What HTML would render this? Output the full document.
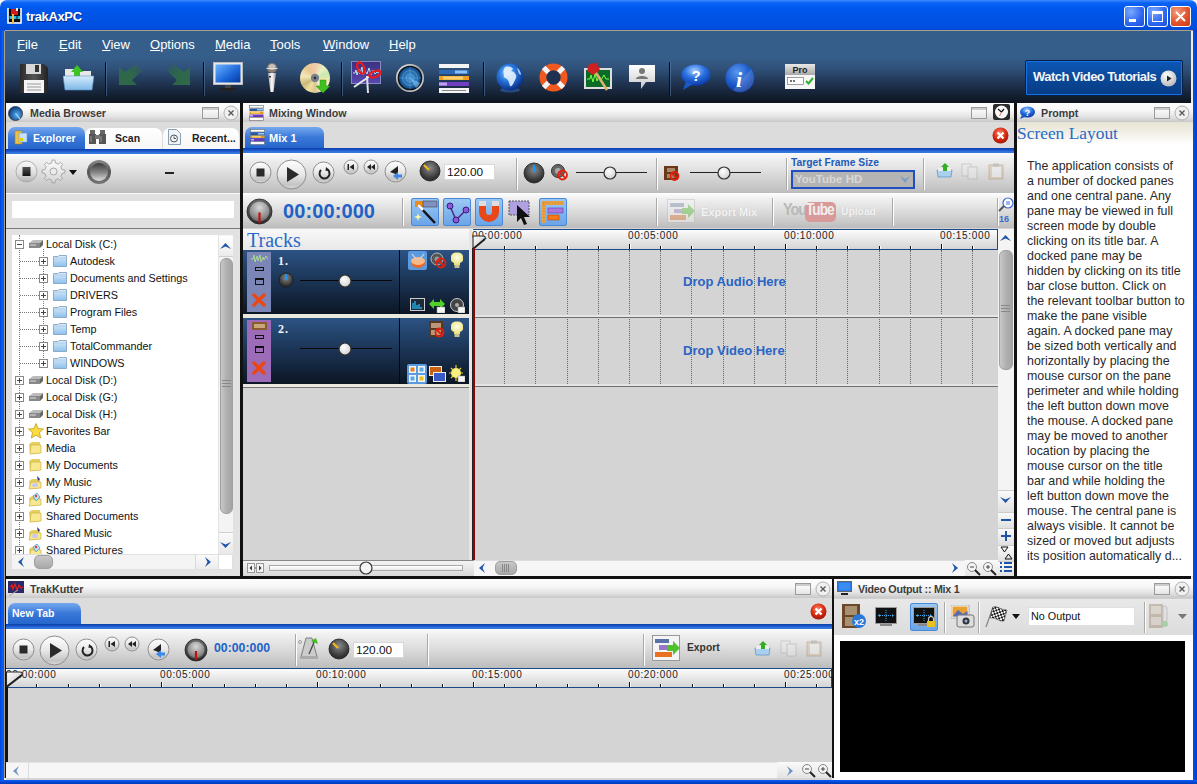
<!DOCTYPE html>
<html><head><meta charset="utf-8">
<style>
*{margin:0;padding:0;box-sizing:border-box}
html,body{width:1197px;height:784px;overflow:hidden;background:#111;font-family:"Liberation Sans",sans-serif}
.a{position:absolute}
#title{left:0;top:0;width:1197px;height:31px;background:linear-gradient(#3d8bff 0,#0a62f5 3px,#0058ee 8px,#0054e6 50%,#0050e0 85%,#0046d2 100%);border-radius:7px 7px 0 0}
#fl{left:0;top:30px;width:5px;height:754px;background:linear-gradient(90deg,#0046d6,#0a5cf6 50%,#0050e8)}
#fr{left:1193px;top:30px;width:4px;height:754px;background:linear-gradient(90deg,#0050e8,#0040c8)}
#fb{left:0;top:780px;width:1197px;height:4px;background:linear-gradient(#0a5cf6,#0036b8)}
#menu{left:5px;top:30px;width:1188px;height:73px;border-top:1.5px solid #a8a08c;background:linear-gradient(#365e8b 0,#365e8b 26px,#2f5078 38px,#1d2f4a 55px,#0d141e 72px)}
.mi{top:37px;color:#fff;font-size:13px}
.mi u{text-decoration:underline;text-underline-offset:1px}
.pane{background:#e4e4e4}
.ptitle{position:absolute;left:0;top:0;right:0;height:20px;background:linear-gradient(#fdfdfd 0,#f8f8f8 35%,#e2e2e2 70%,#c8c8c8 95%,#d4d4d4 100%);font-size:11px;font-weight:bold;color:#3a3a3a}
.tabstrip{position:absolute;left:0;right:0;background:#dcdcdc}
.bline{position:absolute;left:0;right:0;height:6px;background:linear-gradient(#0a3ea8 0,#1a56cc 35%,#3a80e2 70%,#1650c0 100%)}
.tb{position:absolute;left:0;right:0;background:linear-gradient(#fbfbfb 0,#f0f0f0 14%,#e2e2e2 40%,#cacaca 80%,#bcbcbc 100%)}
.tab{position:absolute;border-radius:7px 7px 0 0;font-size:11px;font-weight:bold}
.tab.on{background:linear-gradient(#74a7ef,#3a78d8 50%,#2565cc);color:#fff}
.sep{position:absolute;width:2px;background:linear-gradient(90deg,#a8a8a8,#fff)}
.tsep{position:absolute;width:1px;background:#080e18;box-shadow:1px 0 0 rgba(100,140,190,.45)}
</style></head><body>
<div class="a" style="left:0;top:0;width:8px;height:8px;background:#f4f4f4"></div><div class="a" style="left:1189px;top:0;width:8px;height:8px;background:#f4f4f4"></div>
<div id="title" class="a"></div>
<div id="fl" class="a"></div>
<div id="fr" class="a"></div>
<div id="fb" class="a"></div>
<div id="menu" class="a"></div>
<div class="a" style="left:4px;top:31px;width:1px;height:749px;background:#a8a08c"></div><div class="a" style="left:1191px;top:31px;width:2px;height:749px;background:#ecece8"></div><div class="a" style="left:4px;top:778px;width:1189px;height:2px;background:#f0efe8"></div>

<!-- Title text -->
<div class="a" style="left:26px;top:9px;color:#fff;font-size:13px;font-weight:bold;letter-spacing:-0.35px;text-shadow:1px 1px 0 #0a2a8a">trakAxPC</div>

<!-- Menu -->
<div class="a mi" style="left:17px"><u>F</u>ile</div>
<div class="a mi" style="left:59px"><u>E</u>dit</div>
<div class="a mi" style="left:102px"><u>V</u>iew</div>
<div class="a mi" style="left:150px"><u>O</u>ptions</div>
<div class="a mi" style="left:215px"><u>M</u>edia</div>
<div class="a mi" style="left:270px"><u>T</u>ools</div>
<div class="a mi" style="left:323px"><u>W</u>indow</div>
<div class="a mi" style="left:389px"><u>H</u>elp</div>


<!-- app icon -->
<svg class="a" style="left:7px;top:8px" width="15" height="16" viewBox="0 0 15 16"><rect x="1" y="1" width="13" height="13" fill="#0a0a0a"/><path d="M1 0V15H14V0" fill="none" stroke="#fff" stroke-width="1.6"/><rect x="4" y="1" width="7" height="6" fill="#d81818"/><rect x="9" y="0" width="2" height="3" fill="#f0f0f0"/><rect x="2.5" y="8" width="2.5" height="3" fill="#18c0f0"/><rect x="7" y="8" width="2.5" height="3" fill="#18c0f0"/><rect x="10.5" y="8" width="2.5" height="3" fill="#18c0f0"/><rect x="5" y="6" width="2" height="10" fill="#f8c040"/></svg>
<!-- window buttons -->
<div class="a" style="left:1124px;top:6px;width:21px;height:21px;border:1px solid #fff;border-radius:3px;background:radial-gradient(circle at 30% 25%,#7aa8ff,#2c66f0 60%,#1d4fd8)"><div class="a" style="left:4px;top:12px;width:7px;height:3px;background:#fff"></div></div>
<div class="a" style="left:1147px;top:6px;width:21px;height:21px;border:1px solid #fff;border-radius:3px;background:radial-gradient(circle at 30% 25%,#7aa8ff,#2c66f0 60%,#1d4fd8)"><div class="a" style="left:4px;top:4px;width:11px;height:11px;border:1px solid #fff;border-top-width:3px"></div></div>
<div class="a" style="left:1170px;top:6px;width:21px;height:21px;border:1px solid #fff;border-radius:3px;background:radial-gradient(circle at 30% 25%,#f49a7a,#e0502a 60%,#c83a18)"><svg class="a" style="left:3px;top:3px" width="13" height="13"><path d="M2 2L11 11M11 2L2 11" stroke="#fff" stroke-width="2"/></svg></div>

<!-- toolbar separators -->
<div class="a tsep" style="left:105px;top:62px;height:34px"></div>
<div class="a tsep" style="left:203px;top:62px;height:34px"></div>
<div class="a tsep" style="left:341px;top:62px;height:34px"></div>
<div class="a tsep" style="left:483px;top:62px;height:34px"></div>
<div class="a tsep" style="left:669px;top:62px;height:34px"></div>

<!-- floppy -->
<svg class="a" style="left:19px;top:63px" width="30" height="31" viewBox="0 0 30 31"><defs><linearGradient id="fg" x1="0" x2="1"><stop offset="0" stop-color="#2a2a2a"/><stop offset=".5" stop-color="#555"/><stop offset="1" stop-color="#222"/></linearGradient></defs><path d="M1 1H25L29 5V30H1Z" fill="url(#fg)"/><rect x="7" y="1" width="15" height="10" fill="#d8d8d8"/><rect x="16" y="2" width="4" height="7" fill="#333"/><rect x="5" y="17" width="20" height="13" fill="#f4f4f4"/><path d="M8 21H22M8 24H22M8 27H22" stroke="#999" stroke-width="1"/></svg>
<!-- open folder -->
<svg class="a" style="left:63px;top:63px" width="31" height="30" viewBox="0 0 31 30"><defs><linearGradient id="ofg" x1="0" y1="0" x2="0" y2="1"><stop offset="0" stop-color="#d6ecfc"/><stop offset="1" stop-color="#7db8e8"/></linearGradient></defs><path d="M2 6H12L14 8H28V16H2Z" fill="#e8e8e8"/><path d="M14 2L20 9H17V17H11V9H8Z" fill="#3ec422"/><path d="M0 13H31L29 27H2Z" fill="url(#ofg)" stroke="#5a90c0" stroke-width=".6"/></svg>
<!-- back/fwd (disabled) -->
<svg class="a" style="left:117px;top:64px" width="26" height="27" viewBox="0 0 26 27"><defs><linearGradient id="bkg" x1="1" y1="0" x2="0" y2="1"><stop offset="0" stop-color="#2f6a48" stop-opacity="0"/><stop offset=".45" stop-color="#2f6a48" stop-opacity=".9"/><stop offset="1" stop-color="#2f6a48"/></linearGradient></defs><path d="M26 6L15 16L20 21H2V3L8 8L19 0Z" fill="url(#bkg)"/></svg>
<svg class="a" style="left:166px;top:64px" width="26" height="27" viewBox="0 0 26 27"><defs><linearGradient id="fwg" x1="0" y1="0" x2="1" y2="1"><stop offset="0" stop-color="#2f6a48" stop-opacity="0"/><stop offset=".45" stop-color="#2f6a48" stop-opacity=".9"/><stop offset="1" stop-color="#2f6a48"/></linearGradient></defs><path d="M0 6L11 16L6 21H24V3L18 8L7 0Z" fill="url(#fwg)"/></svg>
<!-- monitor -->
<svg class="a" style="left:213px;top:62px" width="30" height="30" viewBox="0 0 30 30"><defs><linearGradient id="mong" x1="0" y1="0" x2="1" y2="1"><stop offset="0" stop-color="#6cb4ff"/><stop offset=".6" stop-color="#1a64d8"/><stop offset="1" stop-color="#0a3a9a"/></linearGradient></defs><rect x="0.5" y="0.5" width="29" height="22" fill="#e8e8e8" stroke="#bbb"/><rect x="2.5" y="2.5" width="25" height="18" fill="url(#mong)"/><rect x="12" y="23" width="6" height="3" fill="#444"/><rect x="7" y="26" width="16" height="3" rx="1.5" fill="#222"/></svg>
<!-- mic -->
<svg class="a" style="left:265px;top:62px" width="14" height="31" viewBox="0 0 14 31"><defs><linearGradient id="micg" x1="0" x2="1"><stop offset="0" stop-color="#aaa"/><stop offset=".5" stop-color="#fafafa"/><stop offset="1" stop-color="#999"/></linearGradient></defs><ellipse cx="7" cy="6" rx="5" ry="5" fill="#8a7a70"/><ellipse cx="7" cy="5" rx="3.5" ry="3" fill="#c8c0b8"/><path d="M1.5 6.5H12.5" stroke="#ddd" stroke-width="1"/><path d="M3 11L5.5 30H8.5L11 11Z" fill="url(#micg)"/><rect x="4" y="14" width="2" height="1.5" fill="#333"/></svg>
<!-- cd -->
<div class="a" style="left:300px;top:63px;width:30px;height:30px;border-radius:50%;background:conic-gradient(from 0deg,#f4c8a8,#e8f0c0 40deg,#c8e8b0 70deg,#f0e8a8 100deg,#f8f0d8 140deg,#d8c890 180deg,#f0e0a0 210deg,#c8b878 240deg,#f4e8b8 280deg,#e8c890 320deg,#f4c8a8)"></div>
<svg class="a" style="left:300px;top:62px" width="32" height="32" viewBox="0 0 32 32"><circle cx="15" cy="16" r="4.2" fill="#7a8090"/><circle cx="15" cy="16" r="1.4" fill="#333"/><path d="M20 18H26V24H30L23 31L16 24H20Z" fill="#40c020" stroke="#2a9010" stroke-width=".5"/></svg>
<!-- scissors wave -->
<svg class="a" style="left:351px;top:61px" width="31" height="33" viewBox="0 0 31 33"><defs><linearGradient id="scg" x1="0" y1="0" x2="0" y2="1"><stop offset="0" stop-color="#3a3080"/><stop offset="1" stop-color="#5a48b0"/></linearGradient></defs><rect x=".5" y=".5" width="29" height="22" fill="url(#scg)" stroke="#8a88c0"/><path d="M2 12H4L5 9L6 14L8 8L9 13L11 6L12 14L14 10L16 13L18 7L20 14L22 9L24 13L26 11L28 12" stroke="#c8f0e8" fill="none" stroke-width=".9"/><path d="M16 15L17 32" stroke="#e0e0e0" stroke-width="2"/><path d="M19 15L3 26" stroke="#e8e8e8" stroke-width="2"/><ellipse cx="10" cy="7" rx="3.2" ry="6" transform="rotate(-25 10 7)" fill="none" stroke="#f01818" stroke-width="2.2"/><ellipse cx="24" cy="13" rx="6" ry="3" transform="rotate(-20 24 13)" fill="none" stroke="#f01818" stroke-width="2.2"/></svg>
<!-- radar -->
<svg class="a" style="left:395px;top:63px" width="30" height="30" viewBox="0 0 30 30"><defs><radialGradient id="rdg" cx=".5" cy=".5" r=".5"><stop offset="0" stop-color="#4a98d8"/><stop offset=".85" stop-color="#1a5a98"/><stop offset="1" stop-color="#0a2a50"/></radialGradient><linearGradient id="rdr" x1="0" y1="0" x2="1" y2="1"><stop offset="0" stop-color="#f0f0f0"/><stop offset=".5" stop-color="#a0a0a0"/><stop offset="1" stop-color="#e0e0e0"/></linearGradient></defs><circle cx="15" cy="15" r="14" fill="url(#rdr)"/><circle cx="15" cy="15" r="12.3" fill="#0a0a10"/><circle cx="15" cy="15" r="11.3" fill="url(#rdg)"/><circle cx="15" cy="15" r="7.5" fill="none" stroke="#6ab0e8" stroke-width=".5"/><circle cx="15" cy="15" r="4" fill="none" stroke="#6ab0e8" stroke-width=".5"/><path d="M15 4V26M4 15H26" stroke="#6ab0e8" stroke-width=".4"/><path d="M15 15L21 25A11 11 0 0 0 25 20Z" fill="#8ad0ff" opacity=".55"/></svg>
<!-- mixer -->
<svg class="a" style="left:439px;top:64px" width="30" height="29" viewBox="0 0 30 29"><rect x="0" y="0" width="30" height="4" fill="#f4f4f4"/><rect x="0" y="6" width="30" height="4" fill="#2a6ab8"/><rect x="16" y="6.5" width="12" height="3" fill="#8ac0f8"/><rect x="0" y="12" width="30" height="4" fill="#f0a020"/><rect x="4" y="12.5" width="20" height="3" fill="#f8d070"/><rect x="0" y="18" width="30" height="4" fill="#7040c0"/><rect x="0" y="18.5" width="8" height="3" fill="#c0a0f0"/><rect x="0" y="24" width="30" height="5" fill="#f4f4f4"/><rect x="3" y="26" width="24" height="1" fill="#888"/></svg>
<!-- globe -->
<svg class="a" style="left:495px;top:63px" width="30" height="30" viewBox="0 0 30 30"><defs><radialGradient id="glg" cx=".4" cy=".35" r=".65"><stop offset="0" stop-color="#9ad0ff"/><stop offset=".45" stop-color="#2a7ae0"/><stop offset="1" stop-color="#0a3088"/></radialGradient></defs><ellipse cx="15" cy="27" rx="10" ry="2.5" fill="#3a7ad0" opacity=".45"/><circle cx="15" cy="14" r="13.5" fill="url(#glg)"/><path d="M10 4C13 3 17 4 18 6L16 8L19 9L21 12C22 14 20 17 19 19C18 22 16 24 15 23C14 20 14 18 12 16C10 15 8 14 9 12C8 10 8 7 10 4Z" fill="#eef6ff" opacity=".85"/><path d="M22 5C24 6 26 9 26 12L24 11Z" fill="#eef6ff" opacity=".7"/></svg>
<!-- lifebuoy -->
<svg class="a" style="left:539px;top:63px" width="29" height="29" viewBox="0 0 29 29"><circle cx="14.5" cy="14.5" r="10.5" fill="none" stroke="#f05a20" stroke-width="7"/><path d="M14.5 0.5V7.5M14.5 21.5V28.5M0.5 14.5H7.5M21.5 14.5H28.5" stroke="#f4f4f4" stroke-width="5" transform="rotate(45 14.5 14.5)"/><circle cx="14.5" cy="14.5" r="7" fill="#1e3150"/></svg>
<!-- axe on screen -->
<svg class="a" style="left:583px;top:63px" width="30" height="29" viewBox="0 0 30 29"><rect x="1" y="5" width="28" height="21" fill="#ddd"/><rect x="3" y="7" width="24" height="17" fill="#0a6a28"/><path d="M4 16L7 16L8 12L10 19L12 11L14 18L16 13L18 17L21 12L23 16L26 16" stroke="#80ff40" fill="none"/><path d="M8 2L24 27" stroke="#e0b070" stroke-width="2.5"/><path d="M6 1L14 0L17 7L10 12L4 8Z" fill="#d02020"/></svg>
<!-- avatar bubble -->
<svg class="a" style="left:628px;top:64px" width="28" height="26" viewBox="0 0 28 26"><defs><linearGradient id="avg" x1="0" y1="0" x2="0" y2="1"><stop offset="0" stop-color="#fff"/><stop offset="1" stop-color="#c8c8c8"/></linearGradient></defs><path d="M1 1H27V18H18L13 25L13 18H1Z" fill="url(#avg)"/><circle cx="14" cy="7" r="3" fill="#777"/><path d="M8 15C8 11 20 11 20 15Z" fill="#777"/></svg>
<!-- help bubble -->
<svg class="a" style="left:680px;top:64px" width="31" height="27" viewBox="0 0 31 27"><defs><radialGradient id="hbg" cx=".45" cy=".3" r=".7"><stop offset="0" stop-color="#a8d0ff"/><stop offset=".5" stop-color="#2a70e0"/><stop offset="1" stop-color="#0a3aa8"/></radialGradient></defs><ellipse cx="16" cy="11" rx="14.5" ry="10.5" fill="url(#hbg)"/><path d="M6 17L3 26L13 20Z" fill="#1a58c8"/><text x="16" y="17" font-family="Liberation Sans" font-weight="bold" font-size="15" fill="#fff" text-anchor="middle">?</text></svg>
<!-- info -->
<svg class="a" style="left:725px;top:63px" width="30" height="30" viewBox="0 0 30 30"><defs><radialGradient id="ifg" cx=".4" cy=".3" r=".75"><stop offset="0" stop-color="#5a98f0"/><stop offset=".6" stop-color="#1a58c8"/><stop offset="1" stop-color="#0a3090"/></radialGradient></defs><circle cx="15" cy="15" r="14.5" fill="url(#ifg)"/><path d="M29 14A14 14 0 0 1 8 27L26 6A14 14 0 0 1 29 14Z" fill="#fff" opacity=".15"/><text x="14" y="24" font-family="Liberation Serif" font-style="italic" font-weight="bold" font-size="22" fill="#fff" text-anchor="middle">i</text></svg>
<!-- pro -->
<svg class="a" style="left:785px;top:64px" width="30" height="25" viewBox="0 0 30 25"><defs><linearGradient id="prg" x1="0" y1="0" x2="0" y2="1"><stop offset="0" stop-color="#e8e8e8"/><stop offset="1" stop-color="#a8a8a8"/></linearGradient></defs><rect x="0" y="0" width="30" height="25" fill="#f6f6f6"/><rect x="0" y="0" width="30" height="11" fill="url(#prg)"/><text x="15" y="9" font-family="Liberation Sans" font-weight="bold" font-size="9" fill="#222" text-anchor="middle">Pro</text><rect x="2.5" y="13.5" width="16" height="7" fill="#fff" stroke="#777" stroke-width=".7"/><circle cx="6" cy="17" r="1.1" fill="#555"/><circle cx="9" cy="17" r="1.1" fill="#555"/><path d="M21 17L23.5 19.5L28 14" stroke="#30b030" stroke-width="2" fill="none"/></svg>

<!-- Watch Video Tutorials -->
<div class="a" style="left:1025px;top:60px;width:158px;height:36px;border:1px solid #05204a;border-radius:2px;background:linear-gradient(#0c58b8,#0a4898 50%,#083c84);box-shadow:inset 0 0 0 1px #1a70e0"></div>
<div class="a" style="left:1033px;top:69px;color:#f4f4f4;font-size:13px;font-weight:bold;letter-spacing:-0.55px">Watch Video Tutorials</div>
<svg class="a" style="left:1160px;top:70px" width="17" height="17" viewBox="0 0 17 17"><defs><radialGradient id="wvg" cx=".4" cy=".3" r=".7"><stop offset="0" stop-color="#fff"/><stop offset="1" stop-color="#bbb"/></radialGradient></defs><circle cx="8.5" cy="8.5" r="8" fill="url(#wvg)"/><path d="M7 5.5L11.5 8.5L7 11.5Z" fill="#222"/></svg>

<!-- Panes -->
<div class="a pane" style="left:6px;top:103px;width:234px;height:473px;background:#e2e2e2"></div>
<div class="a ptitle" style="left:6px;top:103px;width:234px"></div>
<svg class="a" style="left:8px;top:106px" width="15" height="15" viewBox="0 0 15 15"><defs><radialGradient id="mbg" cx=".6" cy=".6" r=".6"><stop offset="0" stop-color="#5ab0f0"/><stop offset="1" stop-color="#0a3a80"/></radialGradient></defs><circle cx="7.5" cy="7.5" r="7" fill="url(#mbg)" stroke="#333" stroke-width=".8"/><path d="M7.5 7.5L12 13" stroke="#8ad0ff" stroke-width="1.2"/></svg>
<div class="a" style="left:30px;top:107px;font-size:10.7px;font-weight:bold;color:#3c3c3c">Media Browser</div>
<div class="a" style="left:202px;top:107px;width:17px;height:12px;border:1px solid #9a9a9a;background:linear-gradient(#fff,#e4e4e4);box-shadow:inset 0 2px 0 #ccc"></div>
<svg class="a" style="left:223px;top:105px" width="16" height="16" viewBox="0 0 16 16"><circle cx="8" cy="8" r="7" fill="#f0f0f0" stroke="#b0b0b0"/><path d="M5.5 5.5L10.5 10.5M10.5 5.5L5.5 10.5" stroke="#5a5a5a" stroke-width="1.4"/></svg>
<div class="a" style="left:6px;top:122px;width:234px;height:27px;background:#dcdcdc"></div>
<div class="a tab on" style="left:8px;top:127px;width:77px;height:22px"></div>
<div class="a tab" style="left:85px;top:128px;width:77px;height:21px;background:linear-gradient(#fff,#f6f6f6)"></div>
<div class="a tab" style="left:163px;top:128px;width:76px;height:21px;background:linear-gradient(#fff,#f6f6f6)"></div>
<svg class="a" style="left:14px;top:130px" width="14" height="15" viewBox="0 0 14 15"><path d="M1 1H8V14H1Z" fill="#f0c040" stroke="#b08010" stroke-width=".6"/><rect x="5" y="3" width="8" height="9" fill="#c8e0f8" stroke="#6a9ad0" stroke-width=".6"/><rect x="6" y="8" width="3" height="3" fill="#e0d000"/></svg>
<div class="a" style="left:33px;top:132px;font-size:10.5px;font-weight:bold;color:#fff">Explorer</div>
<svg class="a" style="left:89px;top:129px" width="17" height="16" viewBox="0 0 17 16"><rect x="1" y="1" width="5" height="5" fill="#666"/><rect x="11" y="1" width="5" height="5" fill="#666"/><path d="M0 5H7V15H0ZM10 5H17V15H10Z" fill="#555"/><rect x="6" y="6" width="5" height="4" fill="#777"/><path d="M2 7V13M12 7V13" stroke="#999"/></svg>
<div class="a" style="left:115px;top:132px;font-size:10.5px;font-weight:bold;color:#222">Scan</div>
<svg class="a" style="left:168px;top:129px" width="13" height="16" viewBox="0 0 13 16"><path d="M0.5 0.5H8.5L12.5 4.5V15.5H0.5Z" fill="#eef4f8" stroke="#8aa0b0"/><circle cx="6" cy="9.5" r="3.5" fill="none" stroke="#555"/><path d="M6 7.5V9.5H8" stroke="#555" fill="none"/></svg>
<div class="a" style="left:192px;top:132px;font-size:10.5px;font-weight:bold;color:#222">Recent...</div>
<div class="a bline" style="left:6px;top:149px;width:234px"></div>
<div class="a tb" style="left:6px;top:154px;width:234px;height:39px"></div>
<svg class="a" style="left:15px;top:160px" width="23" height="23" viewBox="0 0 23 23"><defs><linearGradient id="stg" x1="0" y1="0" x2="0" y2="1"><stop offset="0" stop-color="#fafafa"/><stop offset=".6" stop-color="#dcdcdc"/><stop offset="1" stop-color="#b0b0b0"/></linearGradient><linearGradient id="stq" x1="0" y1="0" x2="0" y2="1"><stop offset="0" stop-color="#555"/><stop offset="1" stop-color="#111"/></linearGradient></defs><circle cx="11.5" cy="11.5" r="10.5" fill="url(#stg)" stroke="#a8a8a8" stroke-width=".9"/><rect x="7.5" y="7" width="8" height="9" fill="url(#stq)"/></svg>
<svg class="a" style="left:41px;top:159px" width="25" height="25" viewBox="0 0 25 25"><defs><linearGradient id="gearg" x1="0" y1="0" x2="0" y2="1"><stop offset="0" stop-color="#fcfcfc"/><stop offset="1" stop-color="#d4d4d4"/></linearGradient></defs><path d="M10.65 3.90L11.06 1.09L13.94 1.09L14.35 3.90L17.27 5.11L19.55 3.41L21.59 5.45L19.89 7.73L21.10 10.65L23.91 11.06L23.91 13.94L21.10 14.35L19.89 17.27L21.59 19.55L19.55 21.59L17.27 19.89L14.35 21.10L13.94 23.91L11.06 23.91L10.65 21.10L7.73 19.89L5.45 21.59L3.41 19.55L5.11 17.27L3.90 14.35L1.09 13.94L1.09 11.06L3.90 10.65L5.11 7.73L3.41 5.45L5.45 3.41L7.73 5.11Z" fill="url(#gearg)" stroke="#a0a0a0" stroke-width=".9" stroke-linejoin="round"/><circle cx="12.5" cy="12.5" r="3.5" fill="#ececec" stroke="#a8a8a8" stroke-width="1"/></svg>
<svg class="a" style="left:69px;top:170px" width="8" height="5"><path d="M0 0H8L4 5Z" fill="#111"/></svg>
<svg class="a" style="left:86px;top:159px" width="26" height="26" viewBox="0 0 26 26"><defs><linearGradient id="rbo" x1="0" y1="0" x2="0" y2="1"><stop offset="0" stop-color="#8a8a8a"/><stop offset=".5" stop-color="#555"/><stop offset="1" stop-color="#777"/></linearGradient><linearGradient id="rbi" x1="0" y1="0" x2="0" y2="1"><stop offset="0" stop-color="#3a3a3a"/><stop offset=".55" stop-color="#8a8a8a"/><stop offset="1" stop-color="#e0e0e0"/></linearGradient></defs><circle cx="13" cy="13" r="12" fill="url(#rbo)"/><circle cx="13" cy="13" r="9" fill="url(#rbi)"/></svg>
<div class="a" style="left:165px;top:172px;width:9px;height:1.5px;background:#222"></div>
<div class="a" style="left:6px;top:193px;width:234px;height:35px;background:#e0e0e0;border-top:1px solid #f8f8f8"></div>
<div class="a" style="left:12px;top:201px;width:222px;height:17px;background:#fff"></div>
<div class="a" style="left:6px;top:228px;width:234px;height:1px;background:#7a7a7a"></div>
<div class="a" style="left:12px;top:235px;width:206px;height:319px;background:#fff;overflow:hidden">
<div class="a" style="left:7px;top:0px;width:0;height:320px;border-left:1px dotted #777"></div>
<div class="a" style="left:31px;top:14px;width:0;height:119px;border-left:1px dotted #777"></div>
<div class="a" style="left:3px;top:5px;width:9px;height:9px;border:1px solid #888;background:#fff"></div>
<div class="a" style="left:5px;top:9px;width:5px;height:1px;background:#444"></div>
<svg class="a" style="left:16px;top:4px" width="16" height="10" viewBox="0 0 16 10"><path d="M1 4L5 1H15L12 4Z" fill="#bbb"/><path d="M1 4H12V9H1Z" fill="#888"/><path d="M12 4L15 1V6L12 9Z" fill="#666"/><path d="M2 6H8" stroke="#ddd"/></svg>
<div class="a" style="left:34px;top:3px;font-size:10.8px;color:#111;white-space:nowrap">Local Disk (C:)</div>
<div class="a" style="left:8px;top:26px;width:19px;height:0;border-top:1px dotted #777"></div>
<div class="a" style="left:27px;top:22px;width:9px;height:9px;border:1px solid #888;background:#fff"></div>
<div class="a" style="left:29px;top:26px;width:5px;height:1px;background:#444"></div>
<div class="a" style="left:31px;top:24px;width:1px;height:5px;background:#444"></div>
<svg class="a" style="left:41px;top:20px" width="14" height="12" viewBox="0 0 14 12"><defs><linearGradient id="fb1" x1="0" y1="0" x2="0" y2="1"><stop offset="0" stop-color="#dcecfa"/><stop offset="1" stop-color="#8cc0ec"/></linearGradient></defs><path d="M0.5 1.5H5L6 0.5H13.5V11.5H0.5Z" fill="url(#fb1)" stroke="#7a9cbc" stroke-width=".8"/><path d="M0.5 3H13.5" stroke="#aac8e4" stroke-width=".8"/></svg>
<div class="a" style="left:58px;top:20px;font-size:10.8px;color:#111;white-space:nowrap">Autodesk</div>
<div class="a" style="left:8px;top:43px;width:19px;height:0;border-top:1px dotted #777"></div>
<div class="a" style="left:27px;top:39px;width:9px;height:9px;border:1px solid #888;background:#fff"></div>
<div class="a" style="left:29px;top:43px;width:5px;height:1px;background:#444"></div>
<div class="a" style="left:31px;top:41px;width:1px;height:5px;background:#444"></div>
<svg class="a" style="left:41px;top:37px" width="14" height="12" viewBox="0 0 14 12"><defs><linearGradient id="fb2" x1="0" y1="0" x2="0" y2="1"><stop offset="0" stop-color="#dcecfa"/><stop offset="1" stop-color="#8cc0ec"/></linearGradient></defs><path d="M0.5 1.5H5L6 0.5H13.5V11.5H0.5Z" fill="url(#fb2)" stroke="#7a9cbc" stroke-width=".8"/><path d="M0.5 3H13.5" stroke="#aac8e4" stroke-width=".8"/></svg>
<div class="a" style="left:58px;top:37px;font-size:10.8px;color:#111;white-space:nowrap">Documents and Settings</div>
<div class="a" style="left:8px;top:60px;width:19px;height:0;border-top:1px dotted #777"></div>
<div class="a" style="left:27px;top:56px;width:9px;height:9px;border:1px solid #888;background:#fff"></div>
<div class="a" style="left:29px;top:60px;width:5px;height:1px;background:#444"></div>
<div class="a" style="left:31px;top:58px;width:1px;height:5px;background:#444"></div>
<svg class="a" style="left:41px;top:54px" width="14" height="12" viewBox="0 0 14 12"><defs><linearGradient id="fb3" x1="0" y1="0" x2="0" y2="1"><stop offset="0" stop-color="#dcecfa"/><stop offset="1" stop-color="#8cc0ec"/></linearGradient></defs><path d="M0.5 1.5H5L6 0.5H13.5V11.5H0.5Z" fill="url(#fb3)" stroke="#7a9cbc" stroke-width=".8"/><path d="M0.5 3H13.5" stroke="#aac8e4" stroke-width=".8"/></svg>
<div class="a" style="left:58px;top:54px;font-size:10.8px;color:#111;white-space:nowrap">DRIVERS</div>
<div class="a" style="left:8px;top:77px;width:19px;height:0;border-top:1px dotted #777"></div>
<div class="a" style="left:27px;top:73px;width:9px;height:9px;border:1px solid #888;background:#fff"></div>
<div class="a" style="left:29px;top:77px;width:5px;height:1px;background:#444"></div>
<div class="a" style="left:31px;top:75px;width:1px;height:5px;background:#444"></div>
<svg class="a" style="left:41px;top:71px" width="14" height="12" viewBox="0 0 14 12"><defs><linearGradient id="fb4" x1="0" y1="0" x2="0" y2="1"><stop offset="0" stop-color="#dcecfa"/><stop offset="1" stop-color="#8cc0ec"/></linearGradient></defs><path d="M0.5 1.5H5L6 0.5H13.5V11.5H0.5Z" fill="url(#fb4)" stroke="#7a9cbc" stroke-width=".8"/><path d="M0.5 3H13.5" stroke="#aac8e4" stroke-width=".8"/></svg>
<div class="a" style="left:58px;top:71px;font-size:10.8px;color:#111;white-space:nowrap">Program Files</div>
<div class="a" style="left:8px;top:94px;width:19px;height:0;border-top:1px dotted #777"></div>
<div class="a" style="left:27px;top:90px;width:9px;height:9px;border:1px solid #888;background:#fff"></div>
<div class="a" style="left:29px;top:94px;width:5px;height:1px;background:#444"></div>
<div class="a" style="left:31px;top:92px;width:1px;height:5px;background:#444"></div>
<svg class="a" style="left:41px;top:88px" width="14" height="12" viewBox="0 0 14 12"><defs><linearGradient id="fb5" x1="0" y1="0" x2="0" y2="1"><stop offset="0" stop-color="#dcecfa"/><stop offset="1" stop-color="#8cc0ec"/></linearGradient></defs><path d="M0.5 1.5H5L6 0.5H13.5V11.5H0.5Z" fill="url(#fb5)" stroke="#7a9cbc" stroke-width=".8"/><path d="M0.5 3H13.5" stroke="#aac8e4" stroke-width=".8"/></svg>
<div class="a" style="left:58px;top:88px;font-size:10.8px;color:#111;white-space:nowrap">Temp</div>
<div class="a" style="left:8px;top:111px;width:19px;height:0;border-top:1px dotted #777"></div>
<div class="a" style="left:27px;top:107px;width:9px;height:9px;border:1px solid #888;background:#fff"></div>
<div class="a" style="left:29px;top:111px;width:5px;height:1px;background:#444"></div>
<div class="a" style="left:31px;top:109px;width:1px;height:5px;background:#444"></div>
<svg class="a" style="left:41px;top:105px" width="14" height="12" viewBox="0 0 14 12"><defs><linearGradient id="fb6" x1="0" y1="0" x2="0" y2="1"><stop offset="0" stop-color="#dcecfa"/><stop offset="1" stop-color="#8cc0ec"/></linearGradient></defs><path d="M0.5 1.5H5L6 0.5H13.5V11.5H0.5Z" fill="url(#fb6)" stroke="#7a9cbc" stroke-width=".8"/><path d="M0.5 3H13.5" stroke="#aac8e4" stroke-width=".8"/></svg>
<div class="a" style="left:58px;top:105px;font-size:10.8px;color:#111;white-space:nowrap">TotalCommander</div>
<div class="a" style="left:8px;top:128px;width:19px;height:0;border-top:1px dotted #777"></div>
<div class="a" style="left:27px;top:124px;width:9px;height:9px;border:1px solid #888;background:#fff"></div>
<div class="a" style="left:29px;top:128px;width:5px;height:1px;background:#444"></div>
<div class="a" style="left:31px;top:126px;width:1px;height:5px;background:#444"></div>
<svg class="a" style="left:41px;top:122px" width="14" height="12" viewBox="0 0 14 12"><defs><linearGradient id="fb7" x1="0" y1="0" x2="0" y2="1"><stop offset="0" stop-color="#dcecfa"/><stop offset="1" stop-color="#8cc0ec"/></linearGradient></defs><path d="M0.5 1.5H5L6 0.5H13.5V11.5H0.5Z" fill="url(#fb7)" stroke="#7a9cbc" stroke-width=".8"/><path d="M0.5 3H13.5" stroke="#aac8e4" stroke-width=".8"/></svg>
<div class="a" style="left:58px;top:122px;font-size:10.8px;color:#111;white-space:nowrap">WINDOWS</div>
<div class="a" style="left:3px;top:141px;width:9px;height:9px;border:1px solid #888;background:#fff"></div>
<div class="a" style="left:5px;top:145px;width:5px;height:1px;background:#444"></div>
<div class="a" style="left:7px;top:143px;width:1px;height:5px;background:#444"></div>
<svg class="a" style="left:16px;top:140px" width="16" height="10" viewBox="0 0 16 10"><path d="M1 4L5 1H15L12 4Z" fill="#bbb"/><path d="M1 4H12V9H1Z" fill="#888"/><path d="M12 4L15 1V6L12 9Z" fill="#666"/><path d="M2 6H8" stroke="#ddd"/></svg>
<div class="a" style="left:34px;top:139px;font-size:10.8px;color:#111;white-space:nowrap">Local Disk (D:)</div>
<div class="a" style="left:3px;top:158px;width:9px;height:9px;border:1px solid #888;background:#fff"></div>
<div class="a" style="left:5px;top:162px;width:5px;height:1px;background:#444"></div>
<div class="a" style="left:7px;top:160px;width:1px;height:5px;background:#444"></div>
<svg class="a" style="left:16px;top:157px" width="16" height="10" viewBox="0 0 16 10"><path d="M1 4L5 1H15L12 4Z" fill="#bbb"/><path d="M1 4H12V9H1Z" fill="#888"/><path d="M12 4L15 1V6L12 9Z" fill="#666"/><path d="M2 6H8" stroke="#ddd"/></svg>
<div class="a" style="left:34px;top:156px;font-size:10.8px;color:#111;white-space:nowrap">Local Disk (G:)</div>
<div class="a" style="left:3px;top:175px;width:9px;height:9px;border:1px solid #888;background:#fff"></div>
<div class="a" style="left:5px;top:179px;width:5px;height:1px;background:#444"></div>
<div class="a" style="left:7px;top:177px;width:1px;height:5px;background:#444"></div>
<svg class="a" style="left:16px;top:174px" width="16" height="10" viewBox="0 0 16 10"><path d="M1 4L5 1H15L12 4Z" fill="#bbb"/><path d="M1 4H12V9H1Z" fill="#888"/><path d="M12 4L15 1V6L12 9Z" fill="#666"/><path d="M2 6H8" stroke="#ddd"/></svg>
<div class="a" style="left:34px;top:173px;font-size:10.8px;color:#111;white-space:nowrap">Local Disk (H:)</div>
<div class="a" style="left:3px;top:192px;width:9px;height:9px;border:1px solid #888;background:#fff"></div>
<div class="a" style="left:5px;top:196px;width:5px;height:1px;background:#444"></div>
<div class="a" style="left:7px;top:194px;width:1px;height:5px;background:#444"></div>
<svg class="a" style="left:16px;top:188px" width="16" height="16" viewBox="0 0 16 16"><path d="M8 0.5L10.2 5.6L15.5 6L11.5 9.6L12.7 15L8 12.2L3.3 15L4.5 9.6L0.5 6L5.8 5.6Z" fill="#f8dc40" stroke="#b89010" stroke-width=".7"/></svg>
<div class="a" style="left:34px;top:190px;font-size:10.8px;color:#111;white-space:nowrap">Favorites Bar</div>
<div class="a" style="left:3px;top:209px;width:9px;height:9px;border:1px solid #888;background:#fff"></div>
<div class="a" style="left:5px;top:213px;width:5px;height:1px;background:#444"></div>
<div class="a" style="left:7px;top:211px;width:1px;height:5px;background:#444"></div>
<svg class="a" style="left:16px;top:206px" width="14" height="14" viewBox="0 0 14 14"><path d="M1 3L4 1H12V12L2 13Z" fill="#e8d060"/><path d="M3 4H13V12L2 13Z" fill="#f8e890" stroke="#c8a830" stroke-width=".6"/></svg>
<div class="a" style="left:34px;top:207px;font-size:10.8px;color:#111;white-space:nowrap">Media</div>
<div class="a" style="left:3px;top:226px;width:9px;height:9px;border:1px solid #888;background:#fff"></div>
<div class="a" style="left:5px;top:230px;width:5px;height:1px;background:#444"></div>
<div class="a" style="left:7px;top:228px;width:1px;height:5px;background:#444"></div>
<svg class="a" style="left:16px;top:223px" width="14" height="14" viewBox="0 0 14 14"><path d="M1 3L4 1H12V12L2 13Z" fill="#e8d060"/><path d="M3 4H13V12L2 13Z" fill="#f8e890" stroke="#c8a830" stroke-width=".6"/></svg>
<div class="a" style="left:34px;top:224px;font-size:10.8px;color:#111;white-space:nowrap">My Documents</div>
<div class="a" style="left:3px;top:243px;width:9px;height:9px;border:1px solid #888;background:#fff"></div>
<div class="a" style="left:5px;top:247px;width:5px;height:1px;background:#444"></div>
<div class="a" style="left:7px;top:245px;width:1px;height:5px;background:#444"></div>
<svg class="a" style="left:16px;top:240px" width="15" height="15" viewBox="0 0 15 15"><path d="M1 6L4 4H12V13L2 14Z" fill="#e8d060"/><path d="M3 7H13V13L1 14Z" fill="#f8e890" stroke="#c8a830" stroke-width=".6"/><ellipse cx="7" cy="10" rx="3" ry="2" fill="#c8c8f0"/><path d="M9 1L12 4L10 6Z" fill="#30308a"/></svg>
<div class="a" style="left:34px;top:241px;font-size:10.8px;color:#111;white-space:nowrap">My Music</div>
<div class="a" style="left:3px;top:260px;width:9px;height:9px;border:1px solid #888;background:#fff"></div>
<div class="a" style="left:5px;top:264px;width:5px;height:1px;background:#444"></div>
<div class="a" style="left:7px;top:262px;width:1px;height:5px;background:#444"></div>
<svg class="a" style="left:16px;top:257px" width="15" height="15" viewBox="0 0 15 15"><path d="M1 6L4 4H12V13L2 14Z" fill="#e8d060"/><path d="M3 7H13V13L1 14Z" fill="#f8e890" stroke="#c8a830" stroke-width=".6"/><path d="M5 4L9 1L12 5L8 9Z" fill="#bde0f8" stroke="#3a80c8" stroke-width=".6"/><circle cx="8" cy="4" r="1.2" fill="#e04040"/></svg>
<div class="a" style="left:34px;top:258px;font-size:10.8px;color:#111;white-space:nowrap">My Pictures</div>
<div class="a" style="left:3px;top:277px;width:9px;height:9px;border:1px solid #888;background:#fff"></div>
<div class="a" style="left:5px;top:281px;width:5px;height:1px;background:#444"></div>
<div class="a" style="left:7px;top:279px;width:1px;height:5px;background:#444"></div>
<svg class="a" style="left:16px;top:274px" width="14" height="14" viewBox="0 0 14 14"><path d="M1 3L4 1H12V12L2 13Z" fill="#e8d060"/><path d="M3 4H13V12L2 13Z" fill="#f8e890" stroke="#c8a830" stroke-width=".6"/></svg>
<div class="a" style="left:34px;top:275px;font-size:10.8px;color:#111;white-space:nowrap">Shared Documents</div>
<div class="a" style="left:3px;top:294px;width:9px;height:9px;border:1px solid #888;background:#fff"></div>
<div class="a" style="left:5px;top:298px;width:5px;height:1px;background:#444"></div>
<div class="a" style="left:7px;top:296px;width:1px;height:5px;background:#444"></div>
<svg class="a" style="left:16px;top:291px" width="15" height="15" viewBox="0 0 15 15"><path d="M1 6L4 4H12V13L2 14Z" fill="#e8d060"/><path d="M3 7H13V13L1 14Z" fill="#f8e890" stroke="#c8a830" stroke-width=".6"/><ellipse cx="7" cy="10" rx="3" ry="2" fill="#c8c8f0"/><path d="M9 1L12 4L10 6Z" fill="#30308a"/></svg>
<div class="a" style="left:34px;top:292px;font-size:10.8px;color:#111;white-space:nowrap">Shared Music</div>
<div class="a" style="left:3px;top:311px;width:9px;height:9px;border:1px solid #888;background:#fff"></div>
<div class="a" style="left:5px;top:315px;width:5px;height:1px;background:#444"></div>
<div class="a" style="left:7px;top:313px;width:1px;height:5px;background:#444"></div>
<svg class="a" style="left:16px;top:308px" width="15" height="15" viewBox="0 0 15 15"><path d="M1 6L4 4H12V13L2 14Z" fill="#e8d060"/><path d="M3 7H13V13L1 14Z" fill="#f8e890" stroke="#c8a830" stroke-width=".6"/><path d="M5 4L9 1L12 5L8 9Z" fill="#bde0f8" stroke="#3a80c8" stroke-width=".6"/><circle cx="8" cy="4" r="1.2" fill="#e04040"/></svg>
<div class="a" style="left:34px;top:309px;font-size:10.8px;color:#111;white-space:nowrap">Shared Pictures</div>
</div>
<div class="a" style="left:218px;top:235px;width:15px;height:319px;background:#f4f4f4;border-left:1px solid #e4e4e4"></div>
<div class="a" style="left:219px;top:236px;width:14px;height:21px;background:linear-gradient(#fff,#ececec);border-bottom:1px solid #d0d0d0"></div><svg class="a" style="left:219px;top:241px" width="13" height="10"><path d="M1 8L6.5 2L12 8L6.5 5.5Z" fill="#1e54a8"/></svg>
<div class="a" style="left:220px;top:258px;width:13px;height:256px;border-radius:6px;background:linear-gradient(90deg,#c8c8c8,#b0b0b0 50%,#a4a4a4);border:1px solid #a0a0a0"></div>
<div class="a" style="left:222px;top:380px;width:9px;height:7px;border-top:1px solid #888;border-bottom:1px solid #888"><div class="a" style="left:0;top:2px;width:9px;height:1px;background:#888"></div></div>
<div class="a" style="left:219px;top:532px;width:14px;height:22px;background:linear-gradient(#fafafa,#e8e8e8);border-top:1px solid #d0d0d0"></div><svg class="a" style="left:219px;top:540px" width="13" height="10"><path d="M1 2L6.5 8L12 2L6.5 4.5Z" fill="#1e54a8"/></svg>
<div class="a" style="left:12px;top:554px;width:206px;height:15px;background:#f4f4f4;border-top:1px solid #e0e0e0"></div>
<svg class="a" style="left:16px;top:556px" width="10" height="12"><path d="M8 1L2 6L8 11L5.5 6Z" fill="#1e54a8"/></svg>
<div class="a" style="left:34px;top:555px;width:19px;height:14px;border-radius:5px;background:linear-gradient(#c8c8c8,#a8a8a8);border:1px solid #a0a0a0"></div>
<div class="a" style="left:195px;top:555px;width:23px;height:14px;background:linear-gradient(#fafafa,#ececec);border-left:1px solid #d8d8d8"></div><svg class="a" style="left:203px;top:556px" width="10" height="12"><path d="M2 1L8 6L2 11L4.5 6Z" fill="#1e54a8"/></svg>
<div class="a" style="left:218px;top:554px;width:15px;height:16px;background:#fff;border:1px solid #e0e0e0"></div>
<div class="a" style="left:243px;top:103px;width:771px;height:473px;background:#d4d4d4"></div>
<div class="a ptitle" style="left:243px;top:103px;width:771px"></div>
<svg class="a" style="left:249px;top:105px" width="15" height="16" viewBox="0 0 15 16"><rect x=".5" y=".5" width="14" height="2.5" fill="#fff" stroke="#666" stroke-width=".6"/><rect x=".5" y="3.5" width="14" height="2.5" fill="#2a5a98"/><rect x="8" y="4" width="6" height="1.5" fill="#9ac8f8"/><rect x=".5" y="6.5" width="14" height="2.5" fill="#e89818"/><rect x="2" y="7" width="9" height="1.5" fill="#f8d070"/><rect x=".5" y="9.5" width="14" height="2.5" fill="#6a38b8"/><rect x="1" y="10" width="3" height="1.5" fill="#c8a8f0"/><rect x=".5" y="12.5" width="14" height="3" fill="#fff" stroke="#666" stroke-width=".6"/></svg>
<div class="a" style="left:269px;top:107px;font-size:10.7px;font-weight:bold;color:#3c3c3c">Mixing Window</div>
<div class="a" style="left:971px;top:107px;width:16px;height:12px;border:1px solid #9a9a9a;background:linear-gradient(#fff,#e4e4e4);box-shadow:inset 0 2px 0 #ccc"></div>
<svg class="a" style="left:993px;top:104px" width="17" height="16" viewBox="0 0 17 16"><rect x="0" y="0" width="17" height="16" rx="2" fill="#2a2a2a"/><circle cx="8.5" cy="8" r="6.5" fill="#f8f8f8"/><path d="M8.5 8L5 5M8.5 8L11 5" stroke="#111" stroke-width="1.2"/><path d="M8.5 8L6.5 12" stroke="#e04040" stroke-width=".8"/></svg>
<div class="a" style="left:243px;top:122px;width:771px;height:26px;background:#dcdcdc"></div>
<div class="a tab on" style="left:245px;top:127px;width:79px;height:21px"></div>
<svg class="a" style="left:250px;top:129px" width="15" height="16" viewBox="0 0 15 16"><rect x=".5" y=".5" width="14" height="2.5" fill="#fff" stroke="#666" stroke-width=".6"/><rect x=".5" y="3.5" width="14" height="2.5" fill="#2a5a98"/><rect x="8" y="4" width="6" height="1.5" fill="#9ac8f8"/><rect x=".5" y="6.5" width="14" height="2.5" fill="#e89818"/><rect x="2" y="7" width="9" height="1.5" fill="#f8d070"/><rect x=".5" y="9.5" width="14" height="2.5" fill="#6a38b8"/><rect x="1" y="10" width="3" height="1.5" fill="#c8a8f0"/><rect x=".5" y="12.5" width="14" height="3" fill="#fff" stroke="#666" stroke-width=".6"/></svg>
<div class="a" style="left:269px;top:132px;font-size:11px;font-weight:bold;color:#fff">Mix 1</div>
<svg class="a" style="left:992px;top:127px" width="17" height="17" viewBox="0 0 17 17"><defs><radialGradient id="crg1" cx=".45" cy=".35" r=".65"><stop offset="0" stop-color="#ff8a70"/><stop offset=".6" stop-color="#d82a10"/><stop offset="1" stop-color="#a01808"/></radialGradient></defs><circle cx="8.5" cy="8.5" r="8" fill="url(#crg1)"/><path d="M5.5 5.5L11.5 11.5M11.5 5.5L5.5 11.5" stroke="#fff" stroke-width="2.4"/></svg>
<div class="a bline" style="left:243px;top:148px;width:771px"></div>
<div class="a tb" style="left:243px;top:153px;width:771px;height:40px"></div>
<div class="a tb" style="left:243px;top:193px;width:771px;height:35px;border-top:1px solid #fff"></div>
<div class="a" style="left:516px;top:158px;width:1px;height:32px;background:#a8a8a8;box-shadow:1px 0 0 #fff"></div>
<div class="a" style="left:656px;top:158px;width:1px;height:32px;background:#a8a8a8;box-shadow:1px 0 0 #fff"></div>
<div class="a" style="left:786px;top:158px;width:1px;height:32px;background:#a8a8a8;box-shadow:1px 0 0 #fff"></div>
<div class="a" style="left:923px;top:158px;width:1px;height:32px;background:#a8a8a8;box-shadow:1px 0 0 #fff"></div>
<div class="a" style="left:402px;top:198px;width:1px;height:28px;background:#a8a8a8;box-shadow:1px 0 0 #fff"></div>
<div class="a" style="left:656px;top:198px;width:1px;height:28px;background:#a8a8a8;box-shadow:1px 0 0 #fff"></div>
<div class="a" style="left:772px;top:198px;width:1px;height:28px;background:#a8a8a8;box-shadow:1px 0 0 #fff"></div>
<div class="a" style="left:892px;top:198px;width:1px;height:28px;background:#a8a8a8;box-shadow:1px 0 0 #fff"></div>
<div class="a" style="left:997px;top:198px;width:1px;height:28px;background:#a8a8a8;box-shadow:1px 0 0 #fff"></div>
<svg class="a" style="left:248.5px;top:160.5px" width="23" height="23" viewBox="0 0 23 23"><defs><linearGradient id="bgs1" x1="0" y1="0" x2="0" y2="1"><stop offset="0" stop-color="#fefefe"/><stop offset=".5" stop-color="#e8e8e8"/><stop offset=".85" stop-color="#c4c4c4"/><stop offset="1" stop-color="#d8d8d8"/></linearGradient></defs><circle cx="11.5" cy="11.5" r="10.5" fill="url(#bgs1)" stroke="#8e8e8e" stroke-width="1"/><rect x="7.5" y="7.5" width="8" height="8" fill="#2a2a2a"/></svg>
<svg class="a" style="left:275.5px;top:158.5px" width="31" height="31" viewBox="0 0 31 31"><defs><linearGradient id="bgp1" x1="0" y1="0" x2="0" y2="1"><stop offset="0" stop-color="#fefefe"/><stop offset=".5" stop-color="#e8e8e8"/><stop offset=".85" stop-color="#c4c4c4"/><stop offset="1" stop-color="#d8d8d8"/></linearGradient></defs><circle cx="15.5" cy="15.5" r="14.5" fill="url(#bgp1)" stroke="#8e8e8e" stroke-width="1"/><path d="M11 8L23 15.5L11 23Z" fill="#2a2a2a"/></svg>
<svg class="a" style="left:311.5px;top:161.0px" width="23" height="23" viewBox="0 0 23 23"><defs><linearGradient id="bgl1" x1="0" y1="0" x2="0" y2="1"><stop offset="0" stop-color="#fefefe"/><stop offset=".5" stop-color="#e8e8e8"/><stop offset=".85" stop-color="#c4c4c4"/><stop offset="1" stop-color="#d8d8d8"/></linearGradient></defs><circle cx="11.5" cy="11.5" r="10.5" fill="url(#bgl1)" stroke="#8e8e8e" stroke-width="1"/><path d="M15.5 8.5A5 5 0 1 1 9 9" fill="none" stroke="#222" stroke-width="2"/><path d="M14 6L17.5 9L13.5 10Z" fill="#222"/></svg>
<svg class="a" style="left:343px;top:159px" width="16" height="16" viewBox="0 0 16 16"><defs><linearGradient id="bgk1" x1="0" y1="0" x2="0" y2="1"><stop offset="0" stop-color="#fefefe"/><stop offset=".5" stop-color="#e8e8e8"/><stop offset=".85" stop-color="#c4c4c4"/><stop offset="1" stop-color="#d8d8d8"/></linearGradient></defs><circle cx="8" cy="8" r="7" fill="url(#bgk1)" stroke="#8e8e8e" stroke-width="1"/><rect x="4.5" y="5" width="1.5" height="6" fill="#222"/><path d="M11 5V11L6.5 8Z" fill="#222"/></svg>
<svg class="a" style="left:363px;top:159px" width="16" height="16" viewBox="0 0 16 16"><defs><linearGradient id="bgr1" x1="0" y1="0" x2="0" y2="1"><stop offset="0" stop-color="#fefefe"/><stop offset=".5" stop-color="#e8e8e8"/><stop offset=".85" stop-color="#c4c4c4"/><stop offset="1" stop-color="#d8d8d8"/></linearGradient></defs><circle cx="8" cy="8" r="7" fill="url(#bgr1)" stroke="#8e8e8e" stroke-width="1"/><path d="M8 5V11L4 8Z M12 5V11L8 8Z" fill="#222"/></svg>
<svg class="a" style="left:383.5px;top:160.0px" width="23" height="23" viewBox="0 0 23 23"><defs><linearGradient id="bgb1" x1="0" y1="0" x2="0" y2="1"><stop offset="0" stop-color="#fefefe"/><stop offset=".5" stop-color="#e8e8e8"/><stop offset=".85" stop-color="#c4c4c4"/><stop offset="1" stop-color="#d8d8d8"/></linearGradient></defs><circle cx="11.5" cy="11.5" r="10.5" fill="url(#bgb1)" stroke="#8e8e8e" stroke-width="1"/><path d="M14 6V15L6 12Z" fill="#222"/><path d="M9 16L14 12V14.5H18V17.5H14V20Z" fill="#3a88e8"/></svg>
<svg class="a" style="left:419px;top:160px" width="22" height="22" viewBox="0 0 22 22"><defs><radialGradient id="kgt1" cx=".5" cy=".35" r=".7"><stop offset="0" stop-color="#8a8a8a"/><stop offset=".7" stop-color="#3a3a3a"/><stop offset="1" stop-color="#222"/></radialGradient></defs><circle cx="11" cy="11" r="10" fill="url(#kgt1)" stroke="#1a1a1a" stroke-width=".8"/><path d="M5 5L10 10" stroke="#f0b818" stroke-width="2.2"/></svg>
<div class="a" style="left:444px;top:164px;width:51px;height:16px;background:#fff;border:1px solid #d8d8d8;font-size:11.8px;color:#111;padding-left:2px;line-height:15px">120.00</div>
<svg class="a" style="left:523px;top:161.5px" width="22" height="22" viewBox="0 0 22 22"><defs><radialGradient id="kgt2" cx=".5" cy=".35" r=".7"><stop offset="0" stop-color="#8a8a8a"/><stop offset=".7" stop-color="#3a3a3a"/><stop offset="1" stop-color="#222"/></radialGradient></defs><circle cx="11" cy="11" r="10" fill="url(#kgt2)" stroke="#1a1a1a" stroke-width=".8"/><path d="M11 3V10" stroke="#1a98f0" stroke-width="2.2"/></svg>
<svg class="a" style="left:551px;top:164px" width="18" height="17" viewBox="0 0 18 17"><circle cx="7" cy="7" r="6.5" fill="#666" stroke="#333"/><circle cx="7" cy="7" r="3" fill="#aaa"/><circle cx="11.5" cy="11" r="4.5" fill="none" stroke="#e02010" stroke-width="1.8"/><path d="M8.5 8L14.5 14" stroke="#e02010" stroke-width="1.8"/></svg>
<div class="a" style="left:576px;top:172px;width:71px;height:1px;background:#222"></div>
<svg class="a" style="left:603px;top:165.5px" width="14" height="14"><defs><radialGradient id="sk610" cx=".4" cy=".35" r=".7"><stop offset="0" stop-color="#fff"/><stop offset="1" stop-color="#d0d0d0"/></radialGradient></defs><circle cx="7" cy="7" r="6" fill="url(#sk610)" stroke="#333" stroke-width="1.2"/></svg>
<svg class="a" style="left:664px;top:166px" width="16" height="15" viewBox="0 0 16 15"><rect x="0" y="0" width="14" height="14" fill="#6a3818"/><rect x="3" y="2" width="8" height="4" fill="#a88868"/><rect x="3" y="8" width="8" height="4" fill="#a88868"/><circle cx="10.5" cy="10" r="4" fill="none" stroke="#e02010" stroke-width="1.8"/><path d="M8 7.5L13 12.5" stroke="#e02010" stroke-width="1.8"/></svg>
<div class="a" style="left:690px;top:172px;width:71px;height:1px;background:#222"></div>
<svg class="a" style="left:717px;top:165.5px" width="14" height="14"><defs><radialGradient id="sk724" cx=".4" cy=".35" r=".7"><stop offset="0" stop-color="#fff"/><stop offset="1" stop-color="#d0d0d0"/></radialGradient></defs><circle cx="7" cy="7" r="6" fill="url(#sk724)" stroke="#333" stroke-width="1.2"/></svg>
<div class="a" style="left:791px;top:157px;font-size:10.3px;font-weight:bold;color:#1e5ab8">Target Frame Size</div>
<div class="a" style="left:791px;top:170px;width:124px;height:19px;border:2px solid #2050c0;background:#b4b4b4;font-size:11.5px;font-weight:bold;color:#d8d8d8;padding-left:2px;line-height:15px">YouTube HD</div>
<svg class="a" style="left:900px;top:176px" width="10" height="8"><path d="M0 0L5 7L10 0L5 3Z" fill="#7a9ac8"/></svg>
<svg class="a" style="left:936px;top:163px" width="17" height="15" viewBox="0 0 17 15"><path d="M1 7H16L15 14H2Z" fill="#a8d0f0" stroke="#5a90c0" stroke-width=".7"/><path d="M2 5H15V8H2Z" fill="#eee"/><path d="M9 0L13 4H11V8H7V4H5Z" fill="#30b020"/></svg>
<svg class="a" style="left:961px;top:163px" width="18" height="17" viewBox="0 0 18 17" opacity=".35"><rect x="1" y="1" width="9" height="12" fill="#eee" stroke="#999"/><rect x="7" y="4" width="9" height="12" fill="#eee" stroke="#999"/></svg>
<svg class="a" style="left:988px;top:163px" width="17" height="17" viewBox="0 0 17 17" opacity=".4"><rect x="1" y="2" width="14" height="14" fill="#d8b890" stroke="#a08060"/><rect x="4" y="4" width="9" height="10" fill="#f4f4f4"/><rect x="5" y="0.5" width="6" height="3" fill="#888"/></svg>
<svg class="a" style="left:245.5px;top:197.5px" width="27.0" height="27.0" viewBox="0 0 27.0 27.0"><defs><linearGradient id="rot3" x1="0" y1="0" x2="0" y2="1"><stop offset="0" stop-color="#6a6a6a"/><stop offset="1" stop-color="#2a2a2a"/></linearGradient><radialGradient id="rit3" cx=".5" cy=".3" r=".75"><stop offset="0" stop-color="#d8d8d8"/><stop offset=".7" stop-color="#8a8a8a"/><stop offset="1" stop-color="#5a5a5a"/></radialGradient></defs><circle cx="13.5" cy="13.5" r="12.5" fill="url(#rot3)" stroke="#222" stroke-width=".8"/><circle cx="13.5" cy="13.5" r="10.0" fill="url(#rit3)"/><path d="M13.5 14.5V25.0" stroke="#c01010" stroke-width="2.2"/></svg>
<div class="a" style="left:283px;top:200px;font-size:20px;font-weight:bold;color:#1e62c8;letter-spacing:.1px">00:00:000</div>
<div class="a" style="left:411px;top:198px;width:28px;height:28px;background:linear-gradient(#9cc8f4,#6aa4e8);border:1px solid #4a88d8;border-radius:2px"></div>
<svg class="a" style="left:411px;top:198px" width="28" height="28" viewBox="0 0 28 28"><rect x="4" y="3" width="8" height="6" fill="#f08818"/><rect x="12" y="3" width="14" height="6" fill="#8090c0" stroke="#444" stroke-width=".6"/><path d="M7 7L24 25" stroke="#111" stroke-width="2.5"/><path d="M7 7L12 12" stroke="#fff" stroke-width="2.5"/><path d="M6 18L7 15L8 18L11 19L8 20L7 23L6 20L3 19Z" fill="#fff8a0"/></svg>
<div class="a" style="left:443px;top:198px;width:28px;height:28px;background:linear-gradient(#9cc8f4,#6aa4e8);border:1px solid #4a88d8;border-radius:2px"></div>
<svg class="a" style="left:443px;top:198px" width="28" height="28" viewBox="0 0 28 28"><path d="M7 8L13 22L23 12" stroke="#4a2a88" stroke-width="1.5" fill="none"/><circle cx="7" cy="8" r="3" fill="#8a5ad8" stroke="#3a1a78"/><circle cx="13" cy="22" r="3" fill="#8a5ad8" stroke="#3a1a78"/><circle cx="23" cy="12" r="3" fill="#8a5ad8" stroke="#3a1a78"/></svg>
<div class="a" style="left:475px;top:198px;width:28px;height:28px;background:linear-gradient(#9cc8f4,#6aa4e8);border:1px solid #4a88d8;border-radius:2px"></div>
<svg class="a" style="left:475px;top:198px" width="28" height="28" viewBox="0 0 28 28"><path d="M4 3H11V14A3 3 0 0 0 17 14V3H24V14A10 10 0 0 1 4 14Z" fill="#e84818"/><rect x="4" y="3" width="7" height="5" fill="#ddd"/><rect x="17" y="3" width="7" height="5" fill="#ddd"/></svg>
<svg class="a" style="left:508px;top:198px" width="26" height="28" viewBox="0 0 26 28"><rect x="1" y="3" width="20" height="14" fill="#b0a0e0" stroke="#555" stroke-dasharray="2 1"/><path d="M9 7V24L13 20L16 27L19 26L16 19H22Z" fill="#111"/></svg>
<div class="a" style="left:539px;top:198px;width:28px;height:28px;background:linear-gradient(#9cc8f4,#6aa4e8);border:1px solid #4a88d8;border-radius:2px"></div>
<svg class="a" style="left:539px;top:198px" width="28" height="28" viewBox="0 0 28 28"><rect x="3" y="3" width="22" height="4" fill="#e8a040"/><rect x="3" y="3" width="4" height="22" fill="#e8a040"/><path d="M4 5H24M5 4V24" stroke="#b06010" stroke-width=".5" stroke-dasharray="1 2"/><rect x="9" y="10" width="15" height="5" fill="#a878e0" stroke="#6040a0" stroke-width=".6"/><rect x="9" y="17" width="11" height="5" fill="#f87818" stroke="#b04808" stroke-width=".6"/></svg>
<svg class="a" style="left:667px;top:199px" width="29" height="24" viewBox="0 0 29 24" opacity=".45"><rect x=".5" y=".5" width="27" height="23" fill="#f4f4f4" stroke="#bbb"/><rect x="3" y="4" width="14" height="4" fill="#8090b0"/><rect x="7" y="10" width="12" height="4" fill="#a088c0"/><rect x="3" y="16" width="16" height="5" fill="#e08040"/><path d="M15 9H21V5L28 12L21 19V15H15Z" fill="#60c040"/></svg>
<div class="a" style="left:701px;top:206px;font-size:11px;font-weight:bold;color:#f4f4f4;text-shadow:0 0 1px #bbb">Export Mix</div>
<div class="a" style="left:783px;top:200px;font-size:17px;font-weight:bold;color:#b8b8b8;letter-spacing:-1.2px;transform:scaleX(.85);transform-origin:left">You</div>
<div class="a" style="left:805px;top:202px;width:31px;height:20px;border-radius:5px;background:#d89a98"></div>
<div class="a" style="left:806px;top:200px;font-size:17px;font-weight:bold;color:#f0f0f0;letter-spacing:-1.2px;transform:scaleX(.8);transform-origin:left">Tube</div>
<div class="a" style="left:841px;top:206px;font-size:10.3px;font-weight:bold;color:#f4f4f4;text-shadow:0 0 1px #bbb">Upload</div>
<svg class="a" style="left:998px;top:197px" width="16" height="16" viewBox="0 0 16 16"><circle cx="10" cy="6" r="5" fill="#fff" stroke="#3a6ad0" stroke-width="1.2"/><path d="M8 5H12M8 7H12" stroke="#3a6ad0"/><path d="M6 9L1 14" stroke="#555" stroke-width="2"/></svg>
<div class="a" style="left:999px;top:214px;font-size:9px;font-weight:bold;color:#3a6ad0">16</div>
<div class="a" style="left:243px;top:229px;width:230px;height:21px;background:linear-gradient(#f8f8f8,#e8e8e8)"></div>
<div class="a" style="left:247px;top:229px;font-family:'Liberation Serif',serif;font-size:20px;color:#2a6ac8">Tracks</div>
<div class="a" style="left:243px;top:250px;width:226px;height:64px;background:linear-gradient(#2d5384,#1c3658 45%,#0c1624)"></div>
<div class="a" style="left:247px;top:252px;width:24px;height:60px;background:#7b86b6"></div>
<div class="a" style="left:399px;top:250px;width:1px;height:64px;background:#05080c"></div>
<div class="a" style="left:278px;top:254px;font-family:'Liberation Serif',serif;font-size:12px;font-weight:bold;color:#f4f4f4;letter-spacing:1px">1.</div>
<div class="a" style="left:255px;top:267px;width:9px;height:4px;border:1.5px solid #111"></div>
<div class="a" style="left:255px;top:278px;width:9px;height:7px;border:1.5px solid #111;border-top-width:2px"></div>
<svg class="a" style="left:252px;top:292px" width="15" height="15" viewBox="0 0 15 15"><path d="M2 3L12 13M12 3L2 13" stroke="#e84818" stroke-width="3.5" stroke-linecap="round"/></svg>
<svg class="a" style="left:251px;top:254px" width="17" height="9" viewBox="0 0 17 9"><path d="M0 5L2 5L3 1L4 8L6 2L7 7L9 1L10 8L12 3L13 6L15 2L17 5" stroke="#a8d890" fill="none"/></svg>
<svg class="a" style="left:278px;top:272px" width="16" height="16" viewBox="0 0 16 16"><defs><radialGradient id="kgtr1" cx=".5" cy=".35" r=".7"><stop offset="0" stop-color="#8a8a8a"/><stop offset=".7" stop-color="#3a3a3a"/><stop offset="1" stop-color="#222"/></radialGradient></defs><circle cx="8" cy="8" r="7" fill="url(#kgtr1)" stroke="#1a1a1a" stroke-width=".8"/><path d="M8 2V8" stroke="#1a98f0" stroke-width="2.2"/></svg>
<div class="a" style="left:300px;top:280px;width:92px;height:1px;background:#080808"></div>
<svg class="a" style="left:338px;top:273.5px" width="14" height="14"><defs><radialGradient id="sk345" cx=".4" cy=".35" r=".7"><stop offset="0" stop-color="#fff"/><stop offset="1" stop-color="#d0d0d0"/></radialGradient></defs><circle cx="7" cy="7" r="6" fill="url(#sk345)" stroke="#333" stroke-width="1.2"/></svg>
<div class="a" style="left:243px;top:318px;width:226px;height:66px;background:linear-gradient(#2d5384,#1c3658 45%,#0c1624)"></div>
<div class="a" style="left:247px;top:320px;width:24px;height:62px;background:#9c6cb8"></div>
<div class="a" style="left:399px;top:318px;width:1px;height:66px;background:#05080c"></div>
<div class="a" style="left:278px;top:322px;font-family:'Liberation Serif',serif;font-size:12px;font-weight:bold;color:#f4f4f4;letter-spacing:1px">2.</div>
<div class="a" style="left:255px;top:335px;width:9px;height:4px;border:1.5px solid #111"></div>
<div class="a" style="left:255px;top:346px;width:9px;height:7px;border:1.5px solid #111;border-top-width:2px"></div>
<svg class="a" style="left:252px;top:360px" width="15" height="15" viewBox="0 0 15 15"><path d="M2 3L12 13M12 3L2 13" stroke="#e84818" stroke-width="3.5" stroke-linecap="round"/></svg>
<svg class="a" style="left:252px;top:322px" width="15" height="8" viewBox="0 0 15 8"><rect x="0" y="0" width="15" height="8" fill="#8a5a30"/><rect x="2" y="2" width="11" height="4" fill="#c8a878"/></svg>
<div class="a" style="left:300px;top:348px;width:92px;height:1px;background:#080808"></div>
<svg class="a" style="left:338px;top:341.5px" width="14" height="14"><defs><radialGradient id="sk345" cx=".4" cy=".35" r=".7"><stop offset="0" stop-color="#fff"/><stop offset="1" stop-color="#d0d0d0"/></radialGradient></defs><circle cx="7" cy="7" r="6" fill="url(#sk345)" stroke="#333" stroke-width="1.2"/></svg>
<div class="a" style="left:243px;top:314px;width:230px;height:4px;background:#ebe8e0"></div>
<div class="a" style="left:243px;top:384px;width:226px;height:4px;background:#ebe8e0;border-bottom:1.5px solid #777"></div>
<div class="a" style="left:408px;top:251px;width:19px;height:19px;background:#5a9ae0;border-radius:2px"></div>
<svg class="a" style="left:409px;top:252px" width="18" height="18" viewBox="0 0 18 18"><ellipse cx="9" cy="11" rx="7" ry="5" fill="#e86828"/><ellipse cx="9" cy="9" rx="7" ry="4" fill="#f8b888"/><path d="M3 2L8 8M15 2L10 8" stroke="#ccc" stroke-width="1.2"/></svg>
<svg class="a" style="left:430px;top:252px" width="17" height="17" viewBox="0 0 17 17"><circle cx="7" cy="7" r="6" fill="#555" stroke="#bbb"/><circle cx="7" cy="7" r="2.5" fill="#999"/><circle cx="11" cy="11" r="4.5" fill="none" stroke="#e02010" stroke-width="1.8"/><path d="M8 8L14 14" stroke="#e02010" stroke-width="1.8"/></svg>
<svg class="a" style="left:451px;top:252px" width="12" height="17" viewBox="0 0 12 17"><defs><radialGradient id="bul1" cx=".5" cy=".4" r=".6"><stop offset="0" stop-color="#fffff0"/><stop offset="1" stop-color="#e8e070"/></radialGradient></defs><path d="M6 .5A5.5 5.5 0 0 1 9 11V13H3V11A5.5 5.5 0 0 1 6 .5Z" fill="url(#bul1)"/><rect x="3.5" y="13" width="5" height="3" fill="#c8c090"/></svg>
<svg class="a" style="left:410px;top:298px" width="15" height="13" viewBox="0 0 15 13"><rect x=".5" y=".5" width="14" height="12" fill="#1a2a3a" stroke="#ccc"/><path d="M3 11V5M5 11V3M7 11V7M9 11V6M11 11V9" stroke="#28b8f0" stroke-width="1.3"/></svg>
<svg class="a" style="left:429px;top:298px" width="16" height="15" viewBox="0 0 16 15"><path d="M0 6L5 1V4H11V1L16 6L11 11V8H5V11Z" fill="#50d028"/><rect x="8" y="9" width="8" height="6" fill="#f4f4f4" stroke="#999" stroke-width=".5"/></svg>
<svg class="a" style="left:450px;top:298px" width="15" height="15" viewBox="0 0 15 15"><circle cx="7" cy="7" r="6.5" fill="#444" stroke="#ccc"/><circle cx="7" cy="7" r="2" fill="#aaa"/><rect x="8" y="9" width="7" height="6" fill="#f4f4f4" stroke="#999" stroke-width=".5"/></svg>
<svg class="a" style="left:429px;top:321px" width="16" height="17" viewBox="0 0 16 17"><rect x="0" y="0" width="14" height="16" fill="#5a3820"/><rect x="2" y="2" width="10" height="5" fill="#b89878"/><rect x="2" y="9" width="10" height="5" fill="#b89878"/><circle cx="10.5" cy="11.5" r="4" fill="none" stroke="#e02010" stroke-width="1.8"/><path d="M8 9L13 14" stroke="#e02010" stroke-width="1.8"/></svg>
<svg class="a" style="left:451px;top:321px" width="12" height="17" viewBox="0 0 12 17"><defs><radialGradient id="bul2" cx=".5" cy=".4" r=".6"><stop offset="0" stop-color="#fffff0"/><stop offset="1" stop-color="#e8e070"/></radialGradient></defs><path d="M6 .5A5.5 5.5 0 0 1 9 11V13H3V11A5.5 5.5 0 0 1 6 .5Z" fill="url(#bul2)"/><rect x="3.5" y="13" width="5" height="3" fill="#c8c090"/></svg>
<div class="a" style="left:407px;top:364px;width:20px;height:20px;background:#5a9ae0;border-radius:2px"></div>
<svg class="a" style="left:409px;top:366px" width="16" height="16" viewBox="0 0 16 16"><rect x="0" y="0" width="7" height="7" fill="#f4f4f4"/><rect x="1.5" y="1.5" width="4" height="4" fill="#e88020"/><rect x="9" y="0" width="7" height="7" fill="#f4f4f4"/><rect x="10.5" y="1.5" width="4" height="4" fill="#58a8e8"/><rect x="0" y="9" width="7" height="7" fill="#f4f4f4"/><rect x="1.5" y="10.5" width="4" height="4" fill="#58a8e8"/><rect x="9" y="9" width="7" height="7" fill="#f4f4f4"/><rect x="10.5" y="10.5" width="4" height="4" fill="#e8c020"/></svg>
<svg class="a" style="left:429px;top:366px" width="17" height="16" viewBox="0 0 17 16"><rect x=".5" y=".5" width="12" height="9" fill="#c86010" stroke="#eee"/><rect x="4.5" y="6.5" width="12" height="9" fill="#3a5ac8" stroke="#eee"/></svg>
<svg class="a" style="left:449px;top:365px" width="16" height="17" viewBox="0 0 16 17"><circle cx="7" cy="8" r="5" fill="#f8f080"/><path d="M7 0V3M7 13V16M0 8H3M11 8H14M2 3L4 5M12 3L10 5M2 13L4 11" stroke="#f0d020" stroke-width="1.2"/><rect x="9" y="11" width="7" height="6" fill="#f4f4f4" stroke="#999" stroke-width=".5"/></svg>
<div class="a" style="left:473px;top:250px;width:525px;height:310px;background:#d4d4d4"></div>
<div class="a" style="left:473px;top:229px;width:525px;height:21px;background:linear-gradient(#fcfcfc,#f0f0f0 30%,#d4d4d4);border-top:1px solid #1a4a8a;border-right:1px solid #1a4a8a;border-bottom:1px solid #1a4a8a"></div>

<div class="a" style="left:473px;top:244px;width:1px;height:5px;background:#111;box-shadow:1px 0 0 #fff"></div>
<div class="a" style="left:472px;top:230px;font-size:10px;letter-spacing:.65px;color:#222">00:00:000</div>
<div class="a" style="left:504px;top:246px;width:1px;height:3px;background:#111;box-shadow:1px 0 0 #fff"></div>
<div class="a" style="left:504px;top:250px;width:0;height:134px;border-left:1px dotted #666"></div>
<div class="a" style="left:535px;top:246px;width:1px;height:3px;background:#111;box-shadow:1px 0 0 #fff"></div>
<div class="a" style="left:535px;top:250px;width:0;height:134px;border-left:1px dotted #666"></div>
<div class="a" style="left:567px;top:246px;width:1px;height:3px;background:#111;box-shadow:1px 0 0 #fff"></div>
<div class="a" style="left:567px;top:250px;width:0;height:134px;border-left:1px dotted #666"></div>
<div class="a" style="left:598px;top:246px;width:1px;height:3px;background:#111;box-shadow:1px 0 0 #fff"></div>
<div class="a" style="left:598px;top:250px;width:0;height:134px;border-left:1px dotted #666"></div>
<div class="a" style="left:629px;top:244px;width:1px;height:5px;background:#111;box-shadow:1px 0 0 #fff"></div>
<div class="a" style="left:628px;top:230px;font-size:10px;letter-spacing:.65px;color:#222">00:05:000</div>
<div class="a" style="left:629px;top:250px;width:0;height:134px;border-left:1px dotted #666"></div>
<div class="a" style="left:660px;top:246px;width:1px;height:3px;background:#111;box-shadow:1px 0 0 #fff"></div>
<div class="a" style="left:660px;top:250px;width:0;height:134px;border-left:1px dotted #666"></div>
<div class="a" style="left:691px;top:246px;width:1px;height:3px;background:#111;box-shadow:1px 0 0 #fff"></div>
<div class="a" style="left:691px;top:250px;width:0;height:134px;border-left:1px dotted #666"></div>
<div class="a" style="left:723px;top:246px;width:1px;height:3px;background:#111;box-shadow:1px 0 0 #fff"></div>
<div class="a" style="left:723px;top:250px;width:0;height:134px;border-left:1px dotted #666"></div>
<div class="a" style="left:754px;top:246px;width:1px;height:3px;background:#111;box-shadow:1px 0 0 #fff"></div>
<div class="a" style="left:754px;top:250px;width:0;height:134px;border-left:1px dotted #666"></div>
<div class="a" style="left:785px;top:244px;width:1px;height:5px;background:#111;box-shadow:1px 0 0 #fff"></div>
<div class="a" style="left:784px;top:230px;font-size:10px;letter-spacing:.65px;color:#222">00:10:000</div>
<div class="a" style="left:785px;top:250px;width:0;height:134px;border-left:1px dotted #666"></div>
<div class="a" style="left:816px;top:246px;width:1px;height:3px;background:#111;box-shadow:1px 0 0 #fff"></div>
<div class="a" style="left:816px;top:250px;width:0;height:134px;border-left:1px dotted #666"></div>
<div class="a" style="left:847px;top:246px;width:1px;height:3px;background:#111;box-shadow:1px 0 0 #fff"></div>
<div class="a" style="left:847px;top:250px;width:0;height:134px;border-left:1px dotted #666"></div>
<div class="a" style="left:879px;top:246px;width:1px;height:3px;background:#111;box-shadow:1px 0 0 #fff"></div>
<div class="a" style="left:879px;top:250px;width:0;height:134px;border-left:1px dotted #666"></div>
<div class="a" style="left:910px;top:246px;width:1px;height:3px;background:#111;box-shadow:1px 0 0 #fff"></div>
<div class="a" style="left:910px;top:250px;width:0;height:134px;border-left:1px dotted #666"></div>
<div class="a" style="left:941px;top:244px;width:1px;height:5px;background:#111;box-shadow:1px 0 0 #fff"></div>
<div class="a" style="left:940px;top:230px;font-size:10px;letter-spacing:.65px;color:#222">00:15:000</div><svg class="a" style="left:472px;top:235px" width="15" height="15" viewBox="0 0 15 15"><defs><linearGradient id="mkg" x1="0" y1="0" x2="1" y2="1"><stop offset="0" stop-color="#fff"/><stop offset=".45" stop-color="#e4e4e4"/><stop offset=".75" stop-color="#9a9a9a"/><stop offset="1" stop-color="#333"/></linearGradient></defs><path d="M1 1H11Q14 1 13 4L1 14Z" fill="url(#mkg)" stroke="#2a2a2a" stroke-width="1.1"/><path d="M13 4L1 14" stroke="#222" stroke-width="1.8"/></svg>
<div class="a" style="left:941px;top:250px;width:0;height:134px;border-left:1px dotted #666"></div>
<div class="a" style="left:972px;top:246px;width:1px;height:3px;background:#111;box-shadow:1px 0 0 #fff"></div>
<div class="a" style="left:972px;top:250px;width:0;height:134px;border-left:1px dotted #666"></div>
<div class="a" style="left:474px;top:315px;width:524px;height:3px;background:#e4e4e4;border-bottom:1.5px solid #707070"></div>
<div class="a" style="left:474px;top:384px;width:524px;height:3px;background:#e4e4e4;border-bottom:1.5px solid #707070"></div>
<div class="a" style="left:683px;top:274px;font-size:13px;font-weight:bold;color:#2a64c4">Drop Audio Here</div>
<div class="a" style="left:683px;top:343px;font-size:13px;font-weight:bold;color:#2a64c4">Drop Video Here</div>
<div class="a" style="left:469px;top:229px;width:3px;height:331px;background:#e6e6e6"></div>
<div class="a" style="left:472px;top:248px;width:3px;height:328px;background:linear-gradient(90deg,#222 0,#222 1px,#a00808 1px,#8a0000 3px)"></div>

<div class="a" style="left:998px;top:229px;width:16px;height:331px;background:#f4f4f4"></div>
<svg class="a" style="left:999px;top:233px" width="13" height="10"><path d="M1 8L6.5 2L12 8L6.5 5.5Z" fill="#1e54a8"/></svg>
<div class="a" style="left:999px;top:250px;width:14px;height:120px;border-radius:6px;background:linear-gradient(90deg,#c8c8c8,#b0b0b0 50%,#a4a4a4);border:1px solid #a0a0a0"></div>
<div class="a" style="left:1001px;top:305px;width:9px;height:7px;border-top:1px solid #888;border-bottom:1px solid #888"><div class="a" style="left:0;top:2px;width:9px;height:1px;background:#888"></div></div>
<div class="a" style="left:998px;top:490px;width:16px;height:22px;background:linear-gradient(#fafafa,#e0e0e0);border-top:1px solid #ccc"></div>
<div class="a" style="left:998px;top:512px;width:16px;height:16px;background:linear-gradient(#fafafa,#e0e0e0);border-top:1px solid #ccc"></div>
<div class="a" style="left:998px;top:528px;width:16px;height:17px;background:linear-gradient(#fafafa,#e0e0e0);border-top:1px solid #ccc"></div>
<div class="a" style="left:998px;top:545px;width:16px;height:16px;background:linear-gradient(#fafafa,#e0e0e0);border-top:1px solid #ccc"></div>
<div class="a" style="left:998px;top:561px;width:16px;height:15px;background:linear-gradient(#fafafa,#e0e0e0);border-top:1px solid #ccc"></div>
<svg class="a" style="left:999px;top:495px" width="13" height="10"><path d="M1 2L6.5 8L12 2L6.5 4.5Z" fill="#1e54a8"/></svg>
<div class="a" style="left:1001px;top:519px;width:10px;height:2px;background:#1e54a8"></div>
<div class="a" style="left:1001px;top:535px;width:10px;height:2px;background:#1e54a8"></div><div class="a" style="left:1005px;top:531px;width:2px;height:10px;background:#1e54a8"></div>
<svg class="a" style="left:1000px;top:546px" width="13" height="14"><path d="M1 1H8L4.5 6Z M5 13H12L8.5 8Z" fill="none" stroke="#111"/></svg>
<svg class="a" style="left:1000px;top:562px" width="13" height="12"><path d="M0 1H2M0 5H2M0 9H2M4 1H12M4 5H12M4 9H12" stroke="#1e54a8" stroke-width="2"/></svg>
<div class="a" style="left:243px;top:560px;width:231px;height:16px;background:linear-gradient(#f4f4f4,#d8d8d8);border-top:1px solid #888"></div>
<svg class="a" style="left:247px;top:563px" width="17" height="10" viewBox="0 0 17 10"><rect x=".5" y=".5" width="7" height="9" fill="#f4f4f4" stroke="#999"/><rect x="9.5" y=".5" width="7" height="9" fill="#f4f4f4" stroke="#999"/><path d="M5 2.5L2.5 5L5 7.5Z M12 2.5L14.5 5L12 7.5Z" fill="#333"/><rect x="7.5" y="4" width="2" height="2" fill="#999"/></svg>
<div class="a" style="left:269px;top:565px;width:194px;height:6px;border:1px solid #aaa;background:linear-gradient(#fff,#e8e8e8)"></div>
<svg class="a" style="left:359px;top:561px" width="14" height="14"><circle cx="7" cy="7" r="6" fill="#f4f4f4" stroke="#333" stroke-width="1.2"/></svg>
<div class="a" style="left:474px;top:560px;width:524px;height:16px;background:#f6f6f6;border-top:1px solid #ddd"></div>
<svg class="a" style="left:477px;top:562px" width="10" height="12"><path d="M8 1L2 6L8 11L5.5 6Z" fill="#1e54a8"/></svg>
<div class="a" style="left:495px;top:561px;width:22px;height:14px;border-radius:5px;background:linear-gradient(#c8c8c8,#a8a8a8);border:1px solid #a0a0a0"></div><div class="a" style="left:502px;top:564px;width:1px;height:8px;background:#888;box-shadow:2px 0 0 #888,4px 0 0 #888,6px 0 0 #888"></div>
<svg class="a" style="left:950px;top:562px" width="10" height="12"><path d="M2 1L8 6L2 11L4.5 6Z" fill="#1e54a8"/></svg>
<div class="a" style="left:965px;top:560px;width:33px;height:16px;background:linear-gradient(#fafafa,#e4e4e4)"></div>
<svg class="a" style="left:966px;top:561px" width="16" height="15" viewBox="0 0 16 15"><circle cx="6" cy="6" r="4.5" fill="#f4f4f4" stroke="#888"/><path d="M4 6H8" stroke="#444"/><path d="M9 9L14 14" stroke="#222" stroke-width="2"/></svg>
<svg class="a" style="left:982px;top:561px" width="16" height="15" viewBox="0 0 16 15"><circle cx="6" cy="6" r="4.5" fill="#f4f4f4" stroke="#888"/><path d="M4 6H8M6 4V8" stroke="#444"/><path d="M9 9L14 14" stroke="#222" stroke-width="2"/></svg>
<div class="a" style="left:1017px;top:103px;width:176px;height:473px;background:#fff"></div>
<div class="a ptitle" style="left:1017px;top:103px;width:176px"></div>
<svg class="a" style="left:1019px;top:106px" width="16" height="14" viewBox="0 0 16 14"><defs><radialGradient id="pqg" cx=".45" cy=".3" r=".7"><stop offset="0" stop-color="#a8d0ff"/><stop offset=".5" stop-color="#2a70e0"/><stop offset="1" stop-color="#0a3aa8"/></radialGradient></defs><ellipse cx="8.5" cy="6" rx="7.5" ry="5.5" fill="url(#pqg)"/><path d="M3 9L1 13L7 10.5Z" fill="#1a58c8"/><text x="8.5" y="9.5" font-family="Liberation Sans" font-weight="bold" font-size="9" fill="#fff" text-anchor="middle">?</text></svg>
<div class="a" style="left:1041px;top:107px;font-size:10.7px;font-weight:bold;color:#3c3c3c">Prompt</div>
<div class="a" style="left:1154px;top:107px;width:16px;height:12px;border:1px solid #9a9a9a;background:linear-gradient(#fff,#e4e4e4);box-shadow:inset 0 2px 0 #ccc"></div>
<svg class="a" style="left:1174px;top:105px" width="16" height="16" viewBox="0 0 16 16"><circle cx="8" cy="8" r="7" fill="#f0f0f0" stroke="#b0b0b0"/><path d="M5.5 5.5L10.5 10.5M10.5 5.5L5.5 10.5" stroke="#5a5a5a" stroke-width="1.4"/></svg>
<div class="a" style="left:1017px;top:122px;width:176px;height:22px;background:linear-gradient(#e6e4d4,#f4f2ea 60%,#fff)"></div>
<div class="a" style="left:1017px;top:123px;font-family:'Liberation Serif',serif;font-size:17.4px;color:#2a6ac8;white-space:nowrap">Screen Layout</div>
<div class="a" style="left:1027px;top:159px;width:166px;font-size:12.4px;line-height:15px;color:#2a2a2a;white-space:nowrap">The application consists of<br>a number of docked panes<br>and one central pane. Any<br>pane may be viewed in full<br>screen mode by double<br>clicking on its title bar. A<br>docked pane may be<br>hidden by clicking on its title<br>bar close button. Click on<br>the relevant toolbar button to<br>make the pane visible<br>again. A docked pane may<br>be sized both vertically and<br>horizontally by placing the<br>mouse cursor on the pane<br>perimeter and while holding<br>the left button down move<br>the mouse. A docked pane<br>may be moved to another<br>location by placing the<br>mouse cursor on the title<br>bar and while holding the<br>left button down move the<br>mouse. The central pane is<br>always visible. It cannot be<br>sized or moved but adjusts<br>its position automatically d...</div>
<div class="a" style="left:6px;top:579px;width:826px;height:201px;background:#d4d4d4"></div>
<div class="a ptitle" style="left:6px;top:579px;width:826px"></div>
<svg class="a" style="left:8px;top:581px" width="16" height="16" viewBox="0 0 16 16"><rect x="0" y="0" width="16" height="12" fill="#2a2a6a"/><path d="M2 6L4 4L5 8L7 3L9 9L11 4L13 7L15 6" stroke="#e02020" fill="none" stroke-width="1.2"/><path d="M1 15L10 9" stroke="#aaa"/></svg>
<div class="a" style="left:30px;top:583px;font-size:10.7px;font-weight:bold;color:#3c3c3c">TrakKutter</div>
<div class="a" style="left:795px;top:583px;width:16px;height:12px;border:1px solid #9a9a9a;background:linear-gradient(#fff,#e4e4e4);box-shadow:inset 0 2px 0 #ccc"></div>
<svg class="a" style="left:815px;top:581px" width="16" height="16" viewBox="0 0 16 16"><circle cx="8" cy="8" r="7" fill="#f0f0f0" stroke="#b0b0b0"/><path d="M5.5 5.5L10.5 10.5M10.5 5.5L5.5 10.5" stroke="#5a5a5a" stroke-width="1.4"/></svg>
<div class="a" style="left:6px;top:598px;width:826px;height:26px;background:#dcdcdc"></div>
<div class="a tab on" style="left:8px;top:603px;width:73px;height:21px"></div>
<div class="a" style="left:12px;top:607px;font-size:10.5px;font-weight:bold;color:#fff">New Tab</div>
<svg class="a" style="left:810px;top:603px" width="17" height="17" viewBox="0 0 17 17"><defs><radialGradient id="crg2" cx=".45" cy=".35" r=".65"><stop offset="0" stop-color="#ff8a70"/><stop offset=".6" stop-color="#d82a10"/><stop offset="1" stop-color="#a01808"/></radialGradient></defs><circle cx="8.5" cy="8.5" r="8" fill="url(#crg2)"/><path d="M5.5 5.5L11.5 11.5M11.5 5.5L5.5 11.5" stroke="#fff" stroke-width="2.4"/></svg>
<div class="a bline" style="left:6px;top:624px;width:826px"></div>
<div class="a tb" style="left:6px;top:629px;width:826px;height:39px"></div>
<svg class="a" style="left:11.5px;top:638.0px" width="23" height="23" viewBox="0 0 23 23"><defs><linearGradient id="bgs2" x1="0" y1="0" x2="0" y2="1"><stop offset="0" stop-color="#fefefe"/><stop offset=".5" stop-color="#e8e8e8"/><stop offset=".85" stop-color="#c4c4c4"/><stop offset="1" stop-color="#d8d8d8"/></linearGradient></defs><circle cx="11.5" cy="11.5" r="10.5" fill="url(#bgs2)" stroke="#8e8e8e" stroke-width="1"/><rect x="7.5" y="7.5" width="8" height="8" fill="#2a2a2a"/></svg>
<svg class="a" style="left:38.5px;top:635.0px" width="31" height="31" viewBox="0 0 31 31"><defs><linearGradient id="bgp2" x1="0" y1="0" x2="0" y2="1"><stop offset="0" stop-color="#fefefe"/><stop offset=".5" stop-color="#e8e8e8"/><stop offset=".85" stop-color="#c4c4c4"/><stop offset="1" stop-color="#d8d8d8"/></linearGradient></defs><circle cx="15.5" cy="15.5" r="14.5" fill="url(#bgp2)" stroke="#8e8e8e" stroke-width="1"/><path d="M11 8L23 15.5L11 23Z" fill="#2a2a2a"/></svg>
<svg class="a" style="left:74.5px;top:637.5px" width="23" height="23" viewBox="0 0 23 23"><defs><linearGradient id="bgl2" x1="0" y1="0" x2="0" y2="1"><stop offset="0" stop-color="#fefefe"/><stop offset=".5" stop-color="#e8e8e8"/><stop offset=".85" stop-color="#c4c4c4"/><stop offset="1" stop-color="#d8d8d8"/></linearGradient></defs><circle cx="11.5" cy="11.5" r="10.5" fill="url(#bgl2)" stroke="#8e8e8e" stroke-width="1"/><path d="M15.5 8.5A5 5 0 1 1 9 9" fill="none" stroke="#222" stroke-width="2"/><path d="M14 6L17.5 9L13.5 10Z" fill="#222"/></svg>
<svg class="a" style="left:104px;top:635.5px" width="16" height="16" viewBox="0 0 16 16"><defs><linearGradient id="bgk2" x1="0" y1="0" x2="0" y2="1"><stop offset="0" stop-color="#fefefe"/><stop offset=".5" stop-color="#e8e8e8"/><stop offset=".85" stop-color="#c4c4c4"/><stop offset="1" stop-color="#d8d8d8"/></linearGradient></defs><circle cx="8" cy="8" r="7" fill="url(#bgk2)" stroke="#8e8e8e" stroke-width="1"/><rect x="4.5" y="5" width="1.5" height="6" fill="#222"/><path d="M11 5V11L6.5 8Z" fill="#222"/></svg>
<svg class="a" style="left:124px;top:635.5px" width="16" height="16" viewBox="0 0 16 16"><defs><linearGradient id="bgr2" x1="0" y1="0" x2="0" y2="1"><stop offset="0" stop-color="#fefefe"/><stop offset=".5" stop-color="#e8e8e8"/><stop offset=".85" stop-color="#c4c4c4"/><stop offset="1" stop-color="#d8d8d8"/></linearGradient></defs><circle cx="8" cy="8" r="7" fill="url(#bgr2)" stroke="#8e8e8e" stroke-width="1"/><path d="M8 5V11L4 8Z M12 5V11L8 8Z" fill="#222"/></svg>
<svg class="a" style="left:146.5px;top:637.5px" width="23" height="23" viewBox="0 0 23 23"><defs><linearGradient id="bgb2" x1="0" y1="0" x2="0" y2="1"><stop offset="0" stop-color="#fefefe"/><stop offset=".5" stop-color="#e8e8e8"/><stop offset=".85" stop-color="#c4c4c4"/><stop offset="1" stop-color="#d8d8d8"/></linearGradient></defs><circle cx="11.5" cy="11.5" r="10.5" fill="url(#bgb2)" stroke="#8e8e8e" stroke-width="1"/><path d="M14 6V15L6 12Z" fill="#222"/><path d="M9 16L14 12V14.5H18V17.5H14V20Z" fill="#3a88e8"/></svg>
<svg class="a" style="left:184px;top:637.5px" width="24" height="24" viewBox="0 0 24 24"><defs><linearGradient id="rot4" x1="0" y1="0" x2="0" y2="1"><stop offset="0" stop-color="#6a6a6a"/><stop offset="1" stop-color="#2a2a2a"/></linearGradient><radialGradient id="rit4" cx=".5" cy=".3" r=".75"><stop offset="0" stop-color="#d8d8d8"/><stop offset=".7" stop-color="#8a8a8a"/><stop offset="1" stop-color="#5a5a5a"/></radialGradient></defs><circle cx="12" cy="12" r="11" fill="url(#rot4)" stroke="#222" stroke-width=".8"/><circle cx="12" cy="12" r="8.5" fill="url(#rit4)"/><path d="M12 13V22" stroke="#c01010" stroke-width="2.2"/></svg>
<div class="a" style="left:214px;top:641px;font-size:12.3px;font-weight:bold;color:#1e62c8;letter-spacing:0px">00:00:000</div>
<div class="a" style="left:295px;top:634px;width:1px;height:32px;background:#a8a8a8;box-shadow:1px 0 0 #fff"></div>
<div class="a" style="left:427px;top:634px;width:1px;height:32px;background:#a8a8a8;box-shadow:1px 0 0 #fff"></div>
<div class="a" style="left:643px;top:634px;width:1px;height:32px;background:#a8a8a8;box-shadow:1px 0 0 #fff"></div>
<svg class="a" style="left:297px;top:636px" width="24" height="24" viewBox="0 0 24 24"><path d="M9 2H15L20 21H4Z" fill="#ccc" stroke="#666" stroke-width=".8"/><path d="M12 18L18 4" stroke="#444" stroke-width="1.2"/><path d="M14 5L19 2L21 8Z" fill="#40c020"/><rect x="3" y="20" width="18" height="3" fill="#aaa"/><circle cx="3" cy="6" r="1.5" fill="none" stroke="#777" stroke-width=".6"/></svg>
<svg class="a" style="left:328px;top:638px" width="22" height="22" viewBox="0 0 22 22"><defs><radialGradient id="kgt5" cx=".5" cy=".35" r=".7"><stop offset="0" stop-color="#8a8a8a"/><stop offset=".7" stop-color="#3a3a3a"/><stop offset="1" stop-color="#222"/></radialGradient></defs><circle cx="11" cy="11" r="10" fill="url(#kgt5)" stroke="#1a1a1a" stroke-width=".8"/><path d="M5 5L10 10" stroke="#f0b818" stroke-width="2.2"/></svg>
<div class="a" style="left:353px;top:642px;width:51px;height:16px;background:#fff;border:1px solid #d8d8d8;font-size:11.8px;color:#111;padding-left:2px;line-height:15px">120.00</div>
<svg class="a" style="left:652px;top:635px" width="29" height="26" viewBox="0 0 29 26"><rect x=".5" y=".5" width="27" height="25" fill="#f4f4f4" stroke="#999"/><rect x="3" y="4" width="14" height="4" fill="#5a70a8"/><rect x="7" y="10" width="12" height="5" fill="#9a78c8"/><rect x="3" y="17" width="17" height="5" fill="#e87020"/><path d="M15 10H21V6L28 13L21 20V16H15Z" fill="#50c030"/></svg>
<div class="a" style="left:687px;top:642px;font-size:10.3px;font-weight:bold;color:#333">Export</div>
<svg class="a" style="left:754px;top:641px" width="17" height="15" viewBox="0 0 17 15"><path d="M1 7H16L15 14H2Z" fill="#a8d0f0" stroke="#5a90c0" stroke-width=".7"/><path d="M2 5H15V8H2Z" fill="#eee"/><path d="M9 0L13 4H11V8H7V4H5Z" fill="#30b020"/></svg>
<svg class="a" style="left:780px;top:640px" width="18" height="17" viewBox="0 0 18 17" opacity=".35"><rect x="1" y="1" width="9" height="12" fill="#eee" stroke="#999"/><rect x="7" y="4" width="9" height="12" fill="#eee" stroke="#999"/></svg>
<svg class="a" style="left:806px;top:640px" width="17" height="17" viewBox="0 0 17 17" opacity=".4"><rect x="1" y="2" width="14" height="14" fill="#d8b890" stroke="#a08060"/><rect x="4" y="4" width="9" height="10" fill="#f4f4f4"/><rect x="5" y="0.5" width="6" height="3" fill="#888"/></svg>
<div class="a" style="left:6px;top:668px;width:826px;height:20px;background:linear-gradient(#fcfcfc,#f0f0f0 30%,#d4d4d4);border-top:1px solid #1a4a8a;border-bottom:1px solid #1a4a8a;border-right:1px solid #1a4a8a"></div>

<div class="a" style="left:5px;top:682px;width:1px;height:5px;background:#111;box-shadow:1px 0 0 #fff"></div><div class="a" style="left:6px;top:669px;font-size:10px;letter-spacing:.65px;color:#222;white-space:nowrap">00:00:000</div><div class="a" style="left:36px;top:684px;width:1px;height:3px;background:#111;box-shadow:1px 0 0 #fff"></div><div class="a" style="left:68px;top:684px;width:1px;height:3px;background:#111;box-shadow:1px 0 0 #fff"></div><div class="a" style="left:99px;top:684px;width:1px;height:3px;background:#111;box-shadow:1px 0 0 #fff"></div><div class="a" style="left:130px;top:684px;width:1px;height:3px;background:#111;box-shadow:1px 0 0 #fff"></div><div class="a" style="left:161px;top:682px;width:1px;height:5px;background:#111;box-shadow:1px 0 0 #fff"></div><div class="a" style="left:160px;top:669px;font-size:10px;letter-spacing:.65px;color:#222;white-space:nowrap">00:05:000</div><div class="a" style="left:192px;top:684px;width:1px;height:3px;background:#111;box-shadow:1px 0 0 #fff"></div><div class="a" style="left:224px;top:684px;width:1px;height:3px;background:#111;box-shadow:1px 0 0 #fff"></div><div class="a" style="left:255px;top:684px;width:1px;height:3px;background:#111;box-shadow:1px 0 0 #fff"></div><div class="a" style="left:286px;top:684px;width:1px;height:3px;background:#111;box-shadow:1px 0 0 #fff"></div><div class="a" style="left:317px;top:682px;width:1px;height:5px;background:#111;box-shadow:1px 0 0 #fff"></div><div class="a" style="left:316px;top:669px;font-size:10px;letter-spacing:.65px;color:#222;white-space:nowrap">00:10:000</div><div class="a" style="left:348px;top:684px;width:1px;height:3px;background:#111;box-shadow:1px 0 0 #fff"></div><div class="a" style="left:380px;top:684px;width:1px;height:3px;background:#111;box-shadow:1px 0 0 #fff"></div><div class="a" style="left:411px;top:684px;width:1px;height:3px;background:#111;box-shadow:1px 0 0 #fff"></div><div class="a" style="left:442px;top:684px;width:1px;height:3px;background:#111;box-shadow:1px 0 0 #fff"></div><div class="a" style="left:473px;top:682px;width:1px;height:5px;background:#111;box-shadow:1px 0 0 #fff"></div><div class="a" style="left:472px;top:669px;font-size:10px;letter-spacing:.65px;color:#222;white-space:nowrap">00:15:000</div><div class="a" style="left:504px;top:684px;width:1px;height:3px;background:#111;box-shadow:1px 0 0 #fff"></div><div class="a" style="left:536px;top:684px;width:1px;height:3px;background:#111;box-shadow:1px 0 0 #fff"></div><div class="a" style="left:567px;top:684px;width:1px;height:3px;background:#111;box-shadow:1px 0 0 #fff"></div><div class="a" style="left:598px;top:684px;width:1px;height:3px;background:#111;box-shadow:1px 0 0 #fff"></div><div class="a" style="left:629px;top:682px;width:1px;height:5px;background:#111;box-shadow:1px 0 0 #fff"></div><div class="a" style="left:628px;top:669px;font-size:10px;letter-spacing:.65px;color:#222;white-space:nowrap">00:20:000</div><div class="a" style="left:660px;top:684px;width:1px;height:3px;background:#111;box-shadow:1px 0 0 #fff"></div><div class="a" style="left:692px;top:684px;width:1px;height:3px;background:#111;box-shadow:1px 0 0 #fff"></div><div class="a" style="left:723px;top:684px;width:1px;height:3px;background:#111;box-shadow:1px 0 0 #fff"></div><div class="a" style="left:754px;top:684px;width:1px;height:3px;background:#111;box-shadow:1px 0 0 #fff"></div><div class="a" style="left:785px;top:682px;width:1px;height:5px;background:#111;box-shadow:1px 0 0 #fff"></div><div class="a" style="left:784px;top:669px;font-size:10px;letter-spacing:.65px;color:#222;white-space:nowrap">00:25:000</div><svg class="a" style="left:6px;top:671px" width="18" height="17" viewBox="0 0 18 17"><path d="M0.5 1H14Q17 1 16 4L0.5 16Z" fill="url(#mkg)" stroke="#2a2a2a" stroke-width="1.1"/><path d="M16 4L0.5 16" stroke="#222" stroke-width="2"/></svg><div class="a" style="left:816px;top:684px;width:1px;height:3px;background:#111;box-shadow:1px 0 0 #fff"></div>

































<div class="a" style="left:6px;top:687px;width:2px;height:75px;background:#111"></div>
<div class="a" style="left:6px;top:762px;width:826px;height:16px;background:#f6f6f6;border-top:1px solid #e4e4e4"></div>
<div class="a" style="left:28px;top:763px;width:1px;height:15px;background:#ddd"></div>
<svg class="a" style="left:11px;top:765px" width="10" height="12" opacity=".6"><path d="M8 1L2 6L8 11L5.5 6Z" fill="#1e54a8"/></svg>
<div class="a" style="left:777px;top:762px;width:55px;height:16px;background:linear-gradient(#fafafa,#e4e4e4)"></div>
<svg class="a" style="left:785px;top:765px" width="10" height="12" opacity=".6"><path d="M2 1L8 6L2 11L4.5 6Z" fill="#1e54a8"/></svg>
<svg class="a" style="left:801px;top:763px" width="16" height="15" viewBox="0 0 16 15"><circle cx="6" cy="6" r="4.5" fill="#f4f4f4" stroke="#888"/><path d="M4 6H8" stroke="#444"/><path d="M9 9L14 14" stroke="#222" stroke-width="2"/></svg>
<svg class="a" style="left:817px;top:763px" width="16" height="15" viewBox="0 0 16 15"><circle cx="6" cy="6" r="4.5" fill="#f4f4f4" stroke="#888"/><path d="M4 6H8M6 4V8" stroke="#444"/><path d="M9 9L14 14" stroke="#222" stroke-width="2"/></svg>
<div class="a" style="left:834px;top:579px;width:359px;height:201px;background:#fff"></div>
<div class="a ptitle" style="left:834px;top:579px;width:359px"></div>
<svg class="a" style="left:837px;top:581px" width="15" height="15" viewBox="0 0 15 15"><rect x=".5" y=".5" width="14" height="10" fill="#2a78e8" stroke="#666"/><rect x="2" y="2" width="11" height="7" fill="#3a8cf0"/><rect x="4" y="12" width="7" height="2" fill="#222"/></svg>
<div class="a" style="left:858px;top:583px;font-size:10.7px;font-weight:bold;color:#3c3c3c;letter-spacing:-.25px">Video Output :: Mix 1</div>
<div class="a" style="left:1154px;top:583px;width:16px;height:12px;border:1px solid #9a9a9a;background:linear-gradient(#fff,#e4e4e4);box-shadow:inset 0 2px 0 #ccc"></div>
<svg class="a" style="left:1174px;top:581px" width="16" height="16" viewBox="0 0 16 16"><circle cx="8" cy="8" r="7" fill="#f0f0f0" stroke="#b0b0b0"/><path d="M5.5 5.5L10.5 10.5M10.5 5.5L5.5 10.5" stroke="#5a5a5a" stroke-width="1.4"/></svg>
<div class="a" style="left:834px;top:599px;width:359px;height:36px;background:linear-gradient(#e8e8e8,#dcdcdc)"></div>
<svg class="a" style="left:842px;top:604px" width="25" height="25" viewBox="0 0 25 25"><rect x="0" y="0" width="18" height="24" fill="#6a4828"/><rect x="3" y="2" width="12" height="9" fill="#a89070"/><rect x="3" y="13" width="12" height="9" fill="#a89070"/><circle cx="17" cy="17" r="7" fill="#2a78d8"/><text x="17" y="21" font-family="Liberation Sans" font-weight="bold" font-size="9" fill="#fff" text-anchor="middle">x2</text></svg>
<svg class="a" style="left:875px;top:607px" width="22" height="20" viewBox="0 0 22 20"><rect x=".5" y=".5" width="21" height="16" fill="#111" stroke="#999"/><path d="M3 8.5H19M11 3V14" stroke="#38a8f0" stroke-dasharray="1 1"/><path d="M3 8.5L5 7V10Z M19 8.5L17 7V10Z" fill="#38a8f0"/><rect x="5" y="17" width="12" height="2" fill="#888"/></svg>
<div class="a" style="left:910px;top:603px;width:28px;height:28px;background:linear-gradient(#9cc8f4,#6aa4e8);border:1px solid #4a88d8;border-radius:2px"></div>
<svg class="a" style="left:913px;top:607px" width="22" height="20" viewBox="0 0 22 20"><rect x=".5" y=".5" width="21" height="16" fill="#111" stroke="#999"/><path d="M3 8.5H19M11 3V14" stroke="#38a8f0" stroke-dasharray="1 1"/><path d="M3 8.5L5 7V10Z M19 8.5L17 7V10Z" fill="#38a8f0"/><rect x="5" y="17" width="12" height="2" fill="#888"/></svg>
<svg class="a" style="left:926px;top:616px" width="10" height="11" viewBox="0 0 10 11"><path d="M2.5 5V3A2.5 2.5 0 0 1 7.5 3V5" stroke="#ccc" fill="none" stroke-width="1.2"/><rect x="1" y="5" width="8" height="6" fill="#e8c020"/></svg>
<div class="a" style="left:944px;top:602px;width:1px;height:31px;background:#a8a8a8;box-shadow:1px 0 0 #fff"></div>
<div class="a" style="left:978px;top:602px;width:1px;height:31px;background:#a8a8a8;box-shadow:1px 0 0 #fff"></div>
<div class="a" style="left:1144px;top:602px;width:1px;height:31px;background:#a8a8a8;box-shadow:1px 0 0 #fff"></div>
<svg class="a" style="left:951px;top:605px" width="24" height="23" viewBox="0 0 24 23"><rect x="0" y="0" width="18" height="13" fill="#fff" stroke="#aaa"/><rect x="1.5" y="1.5" width="15" height="10" fill="#e8a030"/><path d="M1.5 11.5L7 5L12 9L16.5 6V11.5Z" fill="#5a6ab8"/><rect x="6" y="10" width="17" height="12" rx="2" fill="#ddd" stroke="#777"/><circle cx="15" cy="16" r="3.5" fill="#333"/><circle cx="15" cy="16" r="1.5" fill="#8ab0e8"/></svg>
<svg class="a" style="left:985px;top:604px" width="24" height="24" viewBox="0 0 24 24"><path d="M1 23L8 3" stroke="#888" stroke-width="1.3"/><defs><pattern id="chk" width="4" height="4" patternUnits="userSpaceOnUse" patternTransform="rotate(25)"><rect width="4" height="4" fill="#fff"/><rect width="2" height="2" fill="#111"/><rect x="2" y="2" width="2" height="2" fill="#111"/></pattern></defs><path d="M8 3C12 1 15 6 22 6L19 17C14 18 11 13 5 14Z" fill="url(#chk)" stroke="#333" stroke-width=".5"/></svg>
<svg class="a" style="left:1012px;top:614px" width="8" height="5"><path d="M0 0H8L4 5Z" fill="#111"/></svg>
<div class="a" style="left:1028px;top:607px;width:107px;height:19px;background:#fff;border:1px solid #e0e0e0;font-size:10.8px;color:#111;padding-left:2px;line-height:17px">No Output</div>
<svg class="a" style="left:1149px;top:604px" width="24" height="25" viewBox="0 0 24 25" opacity=".35"><rect x="0" y="0" width="14" height="24" fill="#8a6a48"/><rect x="2" y="2" width="10" height="8" fill="#c8b8a0"/><rect x="2" y="13" width="10" height="8" fill="#c8b8a0"/><rect x="14" y="2" width="4" height="16" rx="2" fill="#ddd" stroke="#888"/><circle cx="16" cy="20" r="3" fill="#40b040"/></svg>
<svg class="a" style="left:1178px;top:614px" width="9" height="5"><path d="M0 0H9L4.5 5Z" fill="#777"/></svg>
<div class="a" style="left:840px;top:641px;width:345px;height:131px;background:#000"></div>

</body></html>
